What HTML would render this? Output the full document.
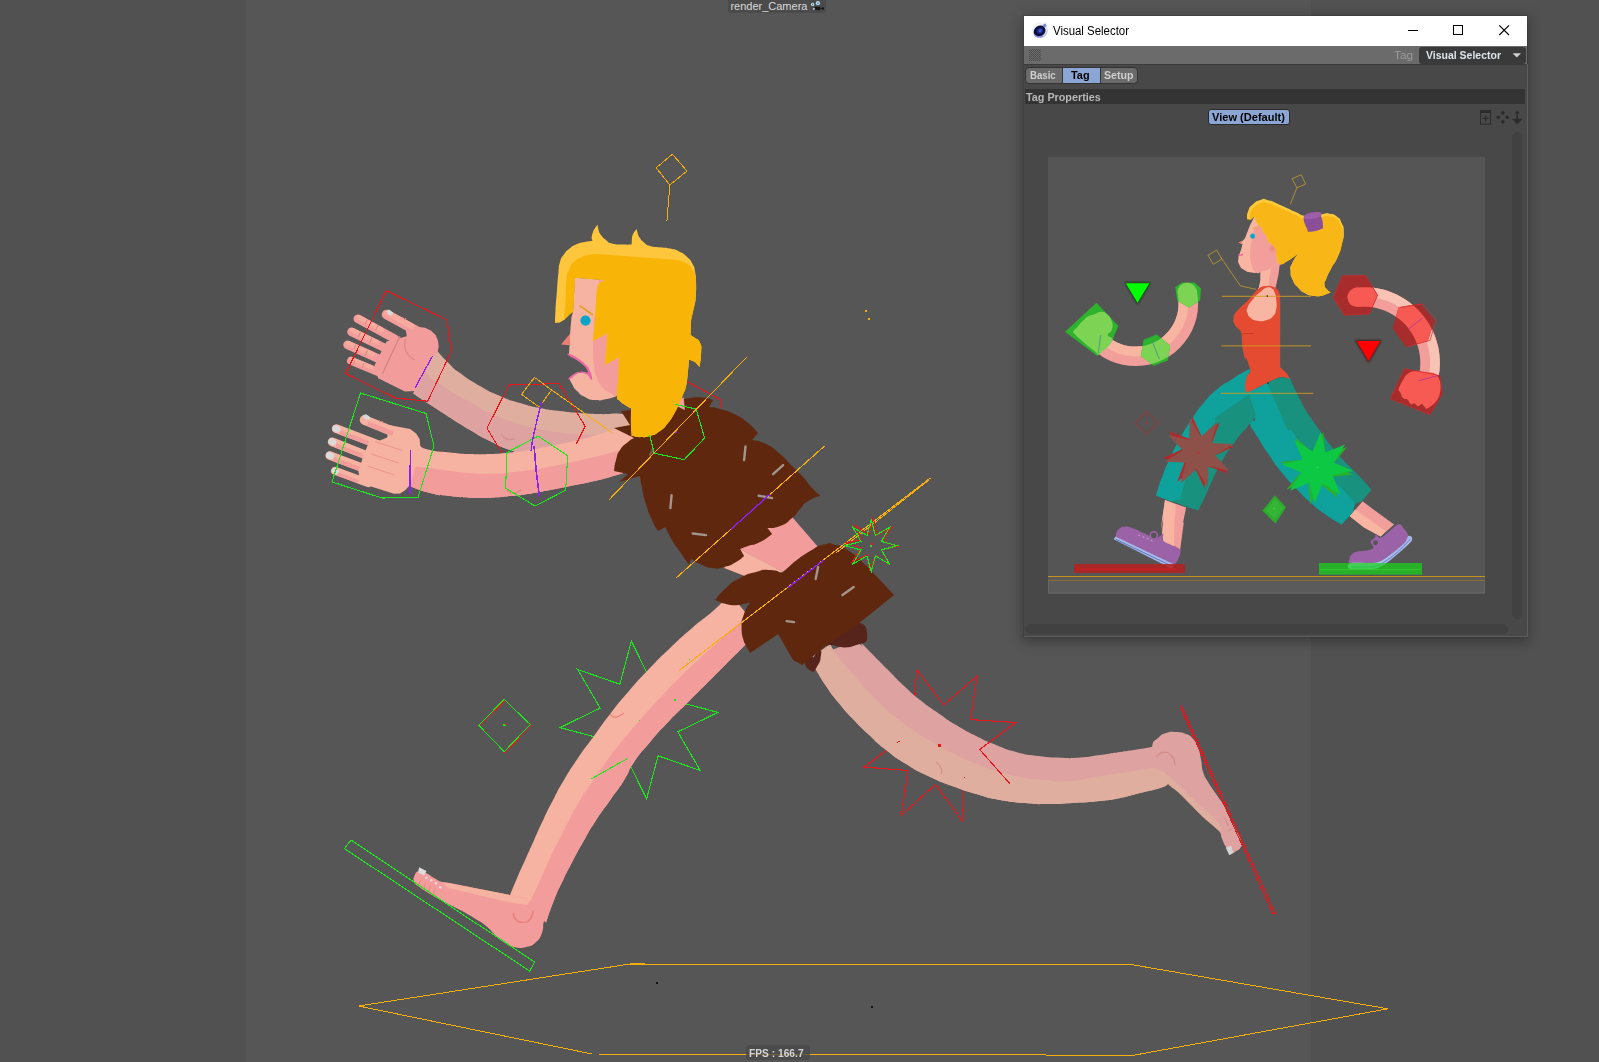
<!DOCTYPE html>
<html><head><meta charset="utf-8"><title>Visual Selector</title>
<style>
html,body{margin:0;padding:0;background:#565656;overflow:hidden}
body{width:1599px;height:1062px;position:relative;font-family:"Liberation Sans",sans-serif}
#art{position:absolute;left:0;top:0}
.t{position:absolute;white-space:nowrap;line-height:1;transform-origin:0 0}
#win{position:absolute;left:1024px;top:16px;width:503px;height:621px;background:#484848;box-shadow:0 3px 12px 2px rgba(0,0,0,.30), 0 0 0 1px rgba(60,60,60,.35)}
#title{position:absolute;left:0;top:0;width:503px;height:30px;background:#fff}
#bar{position:absolute;left:0;top:30px;width:503px;height:18px;background:#6b6b6b;border-bottom:1px solid #3c3c3c}
#dd{position:absolute;left:395px;top:30.5px;width:107px;height:17px;background:#3a3a3a;border-radius:3px}
.tab{position:absolute;top:51px;height:16px;background:#6a6a6a;border:1px solid #333;box-sizing:border-box}
#band{position:absolute;left:1px;top:73px;width:500px;height:14.5px;background:#343434}
#btn{position:absolute;left:184px;top:92.5px;width:82px;height:16.5px;background:#8ba5d4;border:1px solid #2a2a2a;border-radius:3px;box-sizing:border-box}
</style></head><body>
<div style="position:absolute;left:0;top:0;width:246px;height:1062px;background:#515151"></div><div style="position:absolute;left:1311px;top:0;width:288px;height:1062px;background:#515151"></div>
<div id="win">
 <div id="title"></div>
 <div id="bar"></div><div id="dd"></div>
 <div class="tab" style="left:0.5px;width:38.5px;border-radius:4px 0 0 4px;height:17.5px;top:50.5px"></div>
 <div class="tab" style="left:38px;width:38.5px;background:#8ba5d4;height:17.5px;top:50.5px"></div>
 <div class="tab" style="left:75.5px;width:38.5px;border-radius:0 4px 4px 0;height:17.5px;top:50.5px"></div>
 <div id="band"></div>
 <div id="btn"></div>
</div>
<div style="position:absolute;left:728px;top:0;width:98px;height:12.5px;background:#4b4b4b;border-radius:0 0 3px 3px"></div>
<svg id="art" width="1599" height="1062" viewBox="0 0 1599 1062">
<g shape-rendering="crispEdges">
<path d="M358.6,1006 L630,964 L1131,964.5 L1388,1008.8 L1134,1055.2 L592,1054Z" fill="none" stroke="#f6ae0d" stroke-width="1" />
<rect x="656" y="982" width="2.4" height="2.4" fill="#151515"/><rect x="871" y="1006" width="2.4" height="2.4" fill="#151515"/>
<path d="M718.0,712.4 L677.8,731.9 L700.3,770.5 L658.1,755.8 L646.6,799.0 L627.1,758.8 L588.5,781.3 L603.2,739.1 L560.0,727.6 L600.2,708.1 L577.7,669.5 L619.9,684.2 L631.4,641.0 L650.9,681.2 L689.5,658.7 L674.8,700.9Z" fill="none" stroke="#1ce61c" stroke-width="1.1" />
<path d="M914.5,702.0 L916.7,669.6" fill="none" stroke="#e8151a" stroke-width="1.1" />
<path d="M889.7,748.1 L864.1,767.1 L908.1,770.5 L901.5,815.1 L935.5,784.5 L962.5,821.1 L964.1,787.1" fill="none" stroke="#e8151a" stroke-width="1.1" />
</g>
<path d="M436.0,349.4 C440.2,353.9 440.5,355.0 448.5,362.9 C456.5,370.8 449.5,365.3 460.0,373.0 C470.5,380.7 466.7,378.3 480.0,386.0 C493.3,393.7 486.6,390.3 500.0,396.0 C513.4,401.7 506.7,399.0 520.1,403.0 C533.5,407.0 526.8,405.3 540.1,408.0 C553.4,410.7 546.8,409.4 560.1,411.1 C573.4,412.8 566.8,412.1 580.1,413.1 C593.4,414.1 586.1,413.8 600.1,414.1 C614.1,414.4 611.4,412.8 622.1,414.1 C632.8,415.4 628.8,416.8 632.1,418.1 L632.1,430.1 C624.8,434.1 626.8,434.8 610.1,442.1 C593.4,449.4 600.8,447.4 582.1,452.1 C563.4,456.8 571.4,455.1 554.1,456.1 C536.8,457.1 544.8,457.1 530.1,455.1 C515.4,453.1 523.5,454.8 510.1,450.1 C496.7,445.4 503.4,447.8 490.0,441.1 C476.6,434.4 488.0,441.0 470.0,430.1 C452.0,419.2 454.9,420.7 436.0,408.5 C417.1,396.3 420.8,398.5 413.2,393.5Z" fill="#e0ae9e"/>
<path d="M424.6,371.2 C430.5,376.0 427.1,375.4 442.2,385.7 C457.3,396.0 454.1,392.9 470.0,402.0 C485.9,411.1 476.6,406.7 490.0,413.1 C503.4,419.5 496.7,416.4 510.1,421.1 C523.5,425.8 516.8,423.8 530.1,427.1 C543.4,430.4 536.8,428.9 550.1,431.1 C563.4,433.3 556.8,432.6 570.1,433.7 C583.4,434.8 576.8,434.7 590.1,434.5 C603.4,434.3 596.1,435.9 610.1,433.1 C624.1,430.3 624.8,428.4 632.1,426.1 L632.1,430.1 C624.8,434.1 626.8,434.8 610.1,442.1 C593.4,449.4 600.8,447.4 582.1,452.1 C563.4,456.8 571.4,455.1 554.1,456.1 C536.8,457.1 544.8,457.1 530.1,455.1 C515.4,453.1 523.5,454.8 510.1,450.1 C496.7,445.4 503.4,447.8 490.0,441.1 C476.6,434.4 488.0,441.0 470.0,430.1 C452.0,419.2 454.9,420.7 436.0,408.5 C417.1,396.3 420.8,398.5 413.2,393.5Z" fill="#dea2a1"/>
<path d="M501.0,434.1 C503.0,435.8 502.3,437.6 507.0,439.1 C511.7,440.6 512.4,438.8 515.1,438.7" fill="none" stroke="#d4908a" stroke-width="1.2"/>
<path d="M856.1,640.1 C858.1,642.1 860.1,644.8 862.1,646.1 C864.1,647.4 858.1,640.7 862.1,644.0 C866.1,647.3 865.4,647.3 874.1,656.0 C882.8,664.7 878.1,660.0 888.1,670.0 C898.1,680.0 893.4,676.0 904.1,686.0 C914.8,696.0 908.8,691.0 920.1,700.0 C931.4,709.0 926.1,704.6 938.1,713.0 C950.1,721.4 943.4,717.4 956.1,725.1 C968.8,732.8 962.8,729.4 976.1,736.1 C989.4,742.8 982.8,739.8 996.1,745.1 C1009.4,750.4 1002.1,748.4 1016.1,752.1 C1030.1,755.8 1023.5,754.2 1038.2,756.1 C1052.9,758.0 1046.2,757.2 1060.2,757.7 C1074.2,758.2 1066.9,758.4 1080.2,757.5 C1093.5,756.6 1086.8,756.8 1100.1,755.0 C1113.4,753.2 1106.8,754.0 1120.1,752.0 C1133.4,750.0 1129.4,750.7 1140.1,749.0 C1150.8,747.3 1148.1,747.7 1152.1,747.0 L1168.1,784.1 C1165.4,785.4 1169.4,785.1 1160.1,788.1 C1150.8,791.1 1153.4,789.8 1140.1,793.1 C1126.8,796.4 1133.4,795.4 1120.1,798.1 C1106.8,800.8 1116.1,799.4 1100.1,801.1 C1084.1,802.8 1089.5,802.1 1072.2,803.1 C1054.9,804.1 1064.2,804.1 1048.2,804.1 C1032.2,804.1 1040.2,804.4 1024.2,803.1 C1008.2,801.8 1016.1,803.1 1000.1,800.1 C984.1,797.1 992.1,798.8 976.1,794.1 C960.1,789.4 968.1,792.1 952.1,786.1 C936.1,780.1 943.4,783.4 928.1,776.1 C912.8,768.8 920.1,772.8 906.1,764.1 C892.1,755.4 898.8,760.1 886.1,750.1 C873.4,740.1 879.5,744.8 868.1,734.1 C856.7,723.4 862.0,728.7 852.0,718.0 C842.0,707.3 846.7,712.7 838.0,702.0 C829.3,691.3 833.3,696.7 826.0,686.0 C818.7,675.3 820.0,676.0 816.0,670.0 C812.0,664.0 816.7,671.4 814.1,668.1 C811.5,664.8 810.1,662.8 808.1,660.1Z" fill="#dea2a1"/>
<path d="M830.1,644.1 C831.4,646.4 833.5,649.8 834.1,651.1 C834.7,652.4 828.7,643.7 832.0,648.0 C835.3,652.3 835.3,653.3 844.0,664.0 C852.7,674.7 848.0,669.0 858.0,680.0 C868.0,691.0 862.7,685.7 874.1,697.0 C885.5,708.3 880.1,703.6 892.1,714.0 C904.1,724.4 897.4,719.1 910.1,728.1 C922.8,737.1 916.1,732.8 930.1,741.1 C944.1,749.4 937.4,745.8 952.1,753.1 C966.8,760.4 959.4,757.1 974.1,763.1 C988.8,769.1 980.7,766.4 996.1,771.1 C1011.5,775.8 1004.2,774.1 1020.2,777.1 C1036.2,780.1 1027.5,778.8 1044.2,780.1 C1060.9,781.4 1051.6,782.4 1070.2,781.1 C1088.8,779.8 1083.5,778.8 1100.1,776.1 C1116.7,773.4 1106.8,775.1 1120.1,773.1 C1133.4,771.1 1128.8,771.8 1140.1,770.1 C1151.4,768.4 1149.4,768.7 1154.1,768.0 L1168.1,784.1 C1165.4,785.4 1169.4,785.1 1160.1,788.1 C1150.8,791.1 1153.4,789.8 1140.1,793.1 C1126.8,796.4 1133.4,795.4 1120.1,798.1 C1106.8,800.8 1116.1,799.4 1100.1,801.1 C1084.1,802.8 1089.5,802.1 1072.2,803.1 C1054.9,804.1 1064.2,804.1 1048.2,804.1 C1032.2,804.1 1040.2,804.4 1024.2,803.1 C1008.2,801.8 1016.1,803.1 1000.1,800.1 C984.1,797.1 992.1,798.8 976.1,794.1 C960.1,789.4 968.1,792.1 952.1,786.1 C936.1,780.1 943.4,783.4 928.1,776.1 C912.8,768.8 920.1,772.8 906.1,764.1 C892.1,755.4 898.8,760.1 886.1,750.1 C873.4,740.1 879.5,744.8 868.1,734.1 C856.7,723.4 862.0,728.7 852.0,718.0 C842.0,707.3 846.7,712.7 838.0,702.0 C829.3,691.3 833.3,696.7 826.0,686.0 C818.7,675.3 820.0,676.0 816.0,670.0 C812.0,664.0 816.7,671.4 814.1,668.1 C811.5,664.8 810.1,662.8 808.1,660.1Z" fill="#e0ae9e"/>
<path d="M1152.1,747.0 C1153.2,739.0 1154.4,741.7 1158.1,738.0 C1161.8,734.3 1161.3,734.6 1166.1,733.0 C1170.9,731.4 1170.8,731.7 1176.1,732.0 C1181.4,732.3 1181.6,732.1 1186.1,734.0 C1190.6,735.9 1189.9,735.3 1193.1,739.0 C1196.3,742.7 1196.0,742.4 1198.1,748.0 C1200.2,753.6 1199.8,753.6 1201.1,760.0 C1202.4,766.4 1201.2,766.2 1203.1,772.1 C1205.0,778.0 1204.6,776.2 1208.1,782.1 C1211.6,788.0 1211.8,787.7 1216.1,794.1 C1220.4,800.5 1220.4,799.7 1224.1,806.1 C1227.8,812.5 1226.9,811.7 1230.1,818.1 C1233.3,824.5 1233.1,823.7 1236.1,830.1 C1239.1,836.5 1240.1,837.3 1241.2,842.1 C1242.3,846.9 1241.6,845.7 1240.2,848.1 C1238.8,850.5 1238.3,849.9 1236.1,851.1 C1233.9,852.3 1234.8,853.6 1232.1,852.5 C1229.4,851.4 1228.8,850.7 1226.1,847.1 C1223.4,843.5 1224.2,843.6 1222.1,839.1 C1220.0,834.6 1222.9,835.7 1218.1,830.1 C1213.3,824.5 1211.6,825.0 1204.1,818.1 C1196.6,811.2 1197.0,811.0 1190.1,804.1 C1183.2,797.2 1184.0,797.4 1178.1,792.1 C1172.2,786.8 1174.5,790.5 1168.1,784.1 C1161.7,777.7 1158.4,777.9 1154.1,768.0 C1149.8,758.1 1151.0,755.0 1152.1,747.0Z" fill="#dea2a1"/>
<path d="M1154.1,768.0 L1164.1,772.1 L1180.1,786.1 L1196.1,802.1 L1210.1,814.1 L1218.1,822.1 L1222.1,830.5 L1218.5,830.5 L1204.1,818.1 L1190.1,804.1 L1178.1,792.1 L1168.1,784.1 L1152.1,782.1Z" fill="#e0ae9e"/>
<path d="M1225.7,847.5 L1231.1,845.7 L1233.3,853.1 L1229.3,855.3Z" fill="#d4d4d4"/>
<path d="M1156.1,757.0 C1158.4,755.5 1157.9,752.7 1163.1,752.4 C1168.3,752.1 1167.7,751.8 1171.7,756.0 C1175.7,760.2 1174.0,762.0 1175.1,765.0" fill="none" stroke="#d28c88" stroke-width="1.2"/>
<path d="M936.1,762.1 C937.8,764.1 939.4,764.1 941.1,768.1 C942.8,772.1 941.1,772.1 941.1,774.1" fill="none" stroke="#d28c88" stroke-width="1.2"/>
<path d="M1225.1,818.1 L1228.1,826.1" fill="none" stroke="#d28c88" stroke-width="1.0" />
<path d="M1227.1,831.1 L1233.1,828.1" fill="none" stroke="#d28c88" stroke-width="1.0" />
<path d="M826.1,643.1 C831.9,638.0 848.5,624.0 858.1,623.1 C867.7,622.2 867.6,634.0 867.1,639.1 C866.6,644.2 861.5,643.1 856.1,645.1 C850.7,647.1 849.5,647.5 844.1,647.5 C838.7,647.5 837.3,646.1 833.1,645.1 C828.9,644.1 820.3,648.2 826.1,643.1Z" fill="#56241a"/>
<path d="M805.1,661.1 C806.7,656.1 815.5,650.7 819.1,650.1 C822.7,649.5 820.9,654.9 820.5,658.5 C820.1,662.1 819.5,662.7 817.5,665.7 C815.5,668.7 815.0,672.6 812.1,671.5 C809.2,670.4 803.5,666.1 805.1,661.1Z" fill="#56241a"/>
<path d="M815.5,652.1 L813.1,656.1" fill="none" stroke="#a3948c" stroke-width="2.2" stroke-linecap="round"/>
<path d="M760.1,520.1 L792.1,517.1 L818.1,547.1 L800.1,560.1 L782.5,572.1 L738.1,548.1Z" fill="#f29d9b"/>
<path d="M738.1,548.1 L782.5,571.7 L760.1,582.1 L724.1,568.1Z" fill="#f7b3a1"/>
<path d="M730.1,594.0 C724.8,599.3 726.8,598.7 714.1,610.0 C701.4,621.3 706.8,615.3 692.1,628.0 C677.4,640.7 684.8,634.0 670.1,648.0 C655.4,662.0 662.1,655.4 648.1,670.1 C634.1,684.8 640.8,677.4 628.1,692.1 C615.4,706.8 621.5,699.4 610.1,714.1 C598.7,728.8 604.7,721.4 594.0,736.1 C583.3,750.8 588.0,743.4 578.0,758.1 C568.0,772.8 572.0,766.8 564.0,780.1 C556.0,793.4 560.7,785.4 554.1,798.0 C547.5,810.6 550.8,804.0 544.1,818.0 C537.4,832.0 540.4,826.0 534.1,840.0 C527.8,854.0 530.8,847.4 525.1,860.1 C519.4,872.8 522.1,866.4 517.1,878.1 C512.1,889.8 512.4,889.4 510.1,895.1 L546.1,922.5 C548.8,915.0 548.4,914.2 554.1,900.1 C559.8,886.0 556.7,893.4 563.1,880.1 C569.5,866.8 566.2,873.5 573.2,860.1 C580.2,846.7 576.5,853.4 584.2,840.0 C591.9,826.6 587.5,833.3 596.2,820.0 C604.9,806.7 600.9,813.3 610.2,800.0 C619.5,786.7 616.2,792.6 624.2,780.0 C632.2,767.4 625.5,774.7 634.1,762.1 C642.7,749.5 638.8,755.4 650.1,742.1 C661.4,728.8 655.4,735.4 668.1,722.1 C680.8,708.8 674.8,715.4 688.1,702.1 C701.4,688.8 695.4,694.8 708.1,682.1 C720.8,669.4 714.8,675.4 726.1,664.0 C737.4,652.6 730.8,659.3 742.1,648.0 C753.4,636.7 754.1,636.0 760.1,630.0Z" fill="#f7b3a1"/>
<path d="M750.1,612.0 C746.8,615.3 750.1,612.7 740.1,622.0 C730.1,631.3 733.4,628.0 720.1,640.0 C706.8,652.0 714.1,645.0 700.1,658.0 C686.1,671.0 692.1,665.1 678.1,679.1 C664.1,693.1 670.8,686.4 658.1,700.1 C645.4,713.8 652.1,706.4 640.1,720.1 C628.1,733.8 633.5,727.1 622.1,741.1 C610.7,755.1 616.0,748.4 606.0,762.1 C596.0,775.8 600.6,769.5 592.0,782.1 C583.4,794.7 587.5,788.0 580.2,800.0 C572.9,812.0 576.9,805.3 570.2,818.0 C563.5,830.7 566.8,824.7 560.1,838.0 C553.4,851.3 556.4,844.6 550.1,858.0 C543.8,871.4 547.1,864.7 541.1,878.1 C535.1,891.5 536.4,889.1 532.1,898.1 C527.8,907.1 529.4,902.8 528.1,905.1 L546.1,922.5 C548.8,915.0 548.4,914.2 554.1,900.1 C559.8,886.0 556.7,893.4 563.1,880.1 C569.5,866.8 566.2,873.5 573.2,860.1 C580.2,846.7 576.5,853.4 584.2,840.0 C591.9,826.6 587.5,833.3 596.2,820.0 C604.9,806.7 600.9,813.3 610.2,800.0 C619.5,786.7 616.2,792.6 624.2,780.0 C632.2,767.4 625.5,774.7 634.1,762.1 C642.7,749.5 638.8,755.4 650.1,742.1 C661.4,728.8 655.4,735.4 668.1,722.1 C680.8,708.8 674.8,715.4 688.1,702.1 C701.4,688.8 695.4,694.8 708.1,682.1 C720.8,669.4 714.8,675.4 726.1,664.0 C737.4,652.6 730.8,659.3 742.1,648.0 C753.4,636.7 754.1,636.0 760.1,630.0Z" fill="#f29d9b"/>
<path d="M510.1,895.1 C499.4,892.7 500.8,893.2 490.1,891.1 C479.4,889.0 480.8,889.2 470.1,887.1 C459.4,885.0 457.6,884.4 450.1,883.1 C442.6,881.8 446.4,883.4 442.1,882.1 C437.8,880.8 438.4,880.5 434.1,878.1 C429.8,875.7 430.1,875.0 426.1,873.1 C422.1,871.2 422.2,870.4 419.1,871.1 C416.0,871.8 415.8,872.9 414.5,875.7 C413.2,878.5 413.1,878.9 414.1,881.7 C415.1,884.5 413.8,882.8 418.1,886.1 C422.4,889.4 422.6,889.6 430.1,894.1 C437.6,898.6 438.1,898.8 446.1,903.1 C454.1,907.4 452.6,906.1 460.1,910.1 C467.6,914.1 467.2,913.8 474.1,918.1 C481.0,922.4 480.2,921.3 486.1,926.1 C492.0,930.9 491.3,931.7 496.1,936.1 C500.9,940.5 499.3,939.6 504.1,942.5 C508.9,945.4 508.2,945.9 514.1,947.1 C520.0,948.3 520.2,948.4 526.1,947.1 C532.0,945.8 531.8,946.0 536.1,942.1 C540.4,938.2 540.1,937.8 542.1,932.5 C544.1,927.2 542.5,925.9 543.7,922.1 C544.9,918.3 548.0,921.8 546.5,918.1 C545.0,914.4 542.5,912.9 538.1,908.1 C533.7,903.3 537.6,903.6 530.1,900.1 C522.6,896.6 520.8,897.5 510.1,895.1Z" fill="#f29d9b"/>
<path d="M442.1,882.1 L510.1,895.1 L531.1,899.5 L527.1,905.1 L510.1,902.5 L470.1,893.1 L448.1,888.1Z" fill="#f7b3a1"/>
<path d="M513.1,913.1 C514.1,915.3 512.8,916.7 516.1,919.7 C519.4,922.7 518.4,922.3 523.1,922.1 C527.8,921.9 526.8,923.0 530.1,919.1 C533.4,915.2 532.1,913.4 533.1,910.5" fill="none" stroke="#ea7d78" stroke-width="1.4"/>
<path d="M419.1,867.3 L426.5,871.1 L424.1,875.5 L418.1,872.5Z" fill="#dcdcdc"/>
<circle cx="426.5" cy="877.7" r="1.3" fill="#dcdcdc"/>
<circle cx="431.3" cy="880.3" r="1.3" fill="#dcdcdc"/>
<circle cx="435.9" cy="883.3" r="1.3" fill="#dcdcdc"/>
<circle cx="440.3" cy="887.3" r="1.3" fill="#dcdcdc"/>
<path d="M421.1,880.1 C420.6,881.6 419.1,881.6 419.5,884.5 C419.9,887.4 421.4,887.4 422.3,888.9" fill="none" stroke="#ea7d78" stroke-width="0.9"/>
<path d="M425.9,882.9 C425.4,884.4 423.9,884.4 424.3,887.3 C424.7,890.2 426.2,890.2 427.1,891.7" fill="none" stroke="#ea7d78" stroke-width="0.9"/>
<path d="M430.7,885.7 C430.2,887.2 428.7,887.2 429.1,890.1 C429.5,893.0 431.0,893.0 431.9,894.5" fill="none" stroke="#ea7d78" stroke-width="0.9"/>
<path d="M435.5,888.5 C435.0,890.0 433.5,890.0 433.9,892.9 C434.3,895.8 435.8,895.8 436.7,897.3" fill="none" stroke="#ea7d78" stroke-width="0.9"/>
<path d="M610.1,714.5 C612.1,715.4 611.6,717.6 616.1,717.1 C620.6,716.6 621.2,714.4 623.7,713.1" fill="none" stroke="#ea807a" stroke-width="1.2"/>
<path d="M715.0,600.0 L715.0,600.0 C718.7,596.0 717.7,595.3 726.0,588.0 C734.3,580.7 730.0,583.3 740.0,578.0 C750.0,572.7 746.0,574.7 756.0,572.0 C766.0,569.3 761.4,569.7 770.1,570.0 C778.8,570.3 778.1,572.0 782.1,573.0 L794.1,562.0 C799.4,558.3 800.1,556.9 810.1,551.0 C820.1,545.1 815.4,546.4 824.1,544.4 C832.8,542.4 828.1,543.0 836.1,545.0 C844.1,547.0 840.1,545.4 848.1,550.4 C856.1,555.4 850.8,551.5 860.1,560.0 C869.4,568.5 864.8,564.3 876.1,576.0 C887.4,587.7 888.1,588.7 894.1,595.0 L858.1,624.1 L828.1,644.1 L802.1,665.1 L793.1,660.1 L786.1,648.1 L778.1,634.1 L750.0,653.1 L744.0,642.1 C743.2,637.4 741.6,637.5 741.6,628.1 C741.6,618.7 741.2,622.6 744.0,614.0 C746.8,605.4 748.0,606.3 750.0,602.4 L740.0,605.0 C736.0,604.8 736.3,606.1 728.0,604.4 C719.7,602.7 719.3,601.5 715.0,600.0Z" fill="#60270f"/>
<path d="M818.1,567.0 L815.7,579.0" fill="none" stroke="#a3948c" stroke-width="2.4" stroke-linecap="round"/>
<path d="M853.7,587.0 L842.5,595.0" fill="none" stroke="#a3948c" stroke-width="2.4" stroke-linecap="round"/>
<path d="M786.7,621.1 L794.1,622.1" fill="none" stroke="#a3948c" stroke-width="2.4" stroke-linecap="round"/>
<path d="M419.1,445.5 C422.7,447.0 419.7,447.8 430.0,450.1 C440.3,452.4 436.7,451.2 450.0,452.5 C463.3,453.8 456.7,453.6 470.0,454.1 C483.3,454.6 476.6,454.6 490.0,454.1 C503.4,453.6 496.7,453.8 510.1,452.5 C523.5,451.2 516.8,452.2 530.1,450.1 C543.4,448.0 536.8,448.8 550.1,446.1 C563.4,443.4 556.8,445.1 570.1,442.1 C583.4,439.1 576.8,440.8 590.1,437.1 C603.4,433.4 596.8,435.4 610.1,431.1 C623.4,426.8 619.4,427.8 630.1,424.1 C640.8,420.4 638.1,421.4 642.1,420.1 L642.1,468.1 C638.1,469.1 640.8,468.1 630.1,471.1 C619.4,474.1 623.4,473.4 610.1,477.1 C596.8,480.8 603.4,479.1 590.1,482.1 C576.8,485.1 583.4,483.4 570.1,486.1 C556.8,488.8 563.4,487.6 550.1,490.1 C536.8,492.6 543.4,491.7 530.1,493.7 C516.8,495.7 523.5,494.8 510.1,496.1 C496.7,497.4 503.4,497.2 490.0,497.7 C476.6,498.2 483.3,498.2 470.0,497.7 C456.7,497.2 463.3,497.6 450.0,496.1 C436.7,494.6 444.0,496.6 430.0,493.1 C416.0,489.6 415.4,488.1 408.1,485.6Z" fill="#f7b3a1"/>
<path d="M413.6,466.5 C419.1,467.0 417.9,466.6 430.0,468.1 C442.1,469.6 436.7,469.4 450.0,471.1 C463.3,472.8 456.7,472.2 470.0,473.1 C483.3,474.0 476.6,473.9 490.0,473.7 C503.4,473.5 496.7,473.7 510.1,472.5 C523.5,471.3 516.8,472.0 530.1,470.1 C543.4,468.2 536.8,469.2 550.1,466.7 C563.4,464.2 556.8,465.4 570.1,462.5 C583.4,459.6 576.8,461.2 590.1,458.1 C603.4,455.0 596.8,456.8 610.1,453.1 C623.4,449.4 619.4,450.1 630.1,447.1 C640.8,444.1 638.1,445.1 642.1,444.1 L642.1,468.1 C638.1,469.1 640.8,468.1 630.1,471.1 C619.4,474.1 623.4,473.4 610.1,477.1 C596.8,480.8 603.4,479.1 590.1,482.1 C576.8,485.1 583.4,483.4 570.1,486.1 C556.8,488.8 563.4,487.6 550.1,490.1 C536.8,492.6 543.4,491.7 530.1,493.7 C516.8,495.7 523.5,494.8 510.1,496.1 C496.7,497.4 503.4,497.2 490.0,497.7 C476.6,498.2 483.3,498.2 470.0,497.7 C456.7,497.2 463.3,497.6 450.0,496.1 C436.7,494.6 444.0,496.6 430.0,493.1 C416.0,489.6 415.4,488.1 408.1,485.6Z" fill="#f29d9b"/>
<path d="M507.0,490.1 C509.0,491.1 508.4,493.1 513.1,493.1 C517.8,493.1 518.4,491.1 521.1,490.1" fill="none" stroke="#ea807a" stroke-width="1.2"/>
<path d="M684.1,399.0 C689.4,398.4 690.4,396.9 700.1,397.2 C709.8,397.5 708.8,399.1 713.1,400.0 L709.1,407.0 C712.8,407.7 711.1,406.3 720.1,409.0 C729.1,411.7 726.8,410.3 736.1,415.0 C745.4,419.7 740.8,417.0 748.1,423.0 C755.4,429.0 754.8,429.7 758.1,433.0 L752.1,440.0 C756.8,441.3 756.8,439.3 766.1,444.0 C775.4,448.7 771.4,446.6 780.1,454.0 C788.8,461.4 784.8,458.7 792.1,466.1 C799.4,473.5 795.4,468.8 802.1,476.1 C808.8,483.4 806.1,481.6 812.1,488.1 C818.1,494.6 817.4,493.2 820.1,495.7 L820.1,495.7 C816.1,497.5 814.8,496.6 808.1,501.1 C801.4,505.6 805.4,503.4 800.1,509.1 C794.8,514.8 798.8,512.4 792.1,518.1 C785.4,523.8 788.3,522.8 780.1,526.1 C771.9,529.4 771.7,527.4 767.5,528.1 L772.1,534.1 C768.1,536.8 768.1,538.1 760.1,542.1 C752.1,546.1 754.8,543.8 748.1,546.1 C741.4,548.4 742.8,548.1 740.1,549.1 L744.1,556.1 C741.4,558.1 742.8,558.4 736.1,562.1 C729.4,565.8 732.1,565.1 724.1,567.1 C716.1,569.1 720.1,569.1 712.1,568.1 C704.1,567.1 707.1,567.2 700.1,564.1 C693.1,561.0 694.1,560.5 691.1,558.7 L689.1,565.1 C686.1,560.8 685.8,560.4 680.1,552.1 C674.4,543.8 676.9,548.4 672.0,540.1 C667.1,531.8 667.6,531.4 665.4,527.1 L658.0,531.1 C656.0,527.4 656.0,529.1 652.0,520.1 C648.0,511.1 649.3,514.8 646.0,504.1 C642.7,493.4 644.0,497.4 642.0,488.1 C640.0,478.8 640.7,480.1 640.0,476.1 L619.0,482.1 L628.0,474.1 L614.0,471.1 C614.7,467.4 614.0,467.1 616.0,460.1 C618.0,453.1 616.0,456.0 620.0,450.0 C624.0,444.0 623.3,446.0 628.0,442.0 C632.7,438.0 632.0,439.3 634.0,438.0 L614.0,428.0 L630.0,425.0 L621.0,411.0 L632.0,410.0 L650.0,414.0 L666.0,408.0Z" fill="#60270f"/>
<path d="M745.5,446.4 L744.1,460.1" fill="none" stroke="#a3948c" stroke-width="2.4" stroke-linecap="round"/>
<path d="M783.1,465.1 L773.1,474.1" fill="none" stroke="#a3948c" stroke-width="2.4" stroke-linecap="round"/>
<path d="M758.7,495.7 L772.1,498.1" fill="none" stroke="#a3948c" stroke-width="2.4" stroke-linecap="round"/>
<path d="M671.6,495.1 L670.4,508.1" fill="none" stroke="#a3948c" stroke-width="2.4" stroke-linecap="round"/>
<path d="M692.7,533.5 L706.1,535.1" fill="none" stroke="#a3948c" stroke-width="2.4" stroke-linecap="round"/>
<path d="M653.0,449.0 L650.0,455.0" fill="none" stroke="#7d5a4a" stroke-width="2.2" stroke-linecap="round"/>
<path d="M405.0,325.5 L425.1,327.8 L431.1,330.8 L435.6,335.0 L438.1,341.0 L438.7,347.0 L437.1,353.2 L433.6,355.5 L416.3,389.6 L415.1,391.0 L405.0,391.6 L378.2,378.3 L374.5,365.3 L380.5,353.2 L386.5,341.6 L406.8,336.2Z" fill="#f29d9b"/>
<path d="M386.5,314.5 L425.1,335.5" stroke="#f29d9b" stroke-width="9.6" stroke-linecap="round" fill="none"/>
<path d="M387.4,312.9 L411.3,326.0" stroke="#f6ab9e" stroke-width="5.8" stroke-linecap="round" fill="none"/>
<path d="M357.8,318.8 L395.0,339.0" stroke="#f29d9b" stroke-width="8.6" stroke-linecap="round" fill="none"/>
<path d="M358.7,317.2 L381.8,329.8" stroke="#f6ab9e" stroke-width="4.8" stroke-linecap="round" fill="none"/>
<path d="M351.5,331.8 L391.0,351.0" stroke="#f29d9b" stroke-width="8.6" stroke-linecap="round" fill="none"/>
<path d="M352.3,330.2 L376.8,342.1" stroke="#f6ab9e" stroke-width="4.8" stroke-linecap="round" fill="none"/>
<path d="M347.5,344.8 L387.0,362.5" stroke="#f29d9b" stroke-width="8.6" stroke-linecap="round" fill="none"/>
<path d="M348.2,343.2 L372.7,354.2" stroke="#f6ab9e" stroke-width="4.8" stroke-linecap="round" fill="none"/>
<path d="M351.0,360.7 L383.0,374.1" stroke="#f29d9b" stroke-width="8.0" stroke-linecap="round" fill="none"/>
<path d="M351.7,359.1 L371.6,367.3" stroke="#f6ab9e" stroke-width="4.2" stroke-linecap="round" fill="none"/>
<path d="M386.5,311.2 L389.0,309.5 L393.0,312.5 L392.0,315.5 L388.5,314.5Z" fill="#d9d9d9"/>
<path d="M400.0,336.0 L382.5,373.6" fill="none" stroke="#cf837c" stroke-width="1.2" />
<path d="M405.5,339.0 C405.3,341.7 404.0,341.7 405.0,347.0 C406.0,352.3 405.3,350.7 408.5,355.0 C411.7,359.3 412.5,358.3 414.5,360.0" fill="none" stroke="#d48a84" stroke-width="1.1"/>
<path d="M365.0,324.5 L367.2,319.5" fill="none" stroke="#e08882" stroke-width="1.1" />
<path d="M375.5,330.5 L378.0,325.0" fill="none" stroke="#e08882" stroke-width="1.1" />
<path d="M358.2,337.0 L360.5,332.0" fill="none" stroke="#e08882" stroke-width="1.1" />
<path d="M369.5,343.0 L372.0,337.5" fill="none" stroke="#e08882" stroke-width="1.1" />
<path d="M354.0,349.0 L356.0,344.5" fill="none" stroke="#e08882" stroke-width="1.1" />
<path d="M365.0,356.0 L367.5,350.5" fill="none" stroke="#e08882" stroke-width="1.1" />
<path d="M353.0,365.1 L355.0,360.5" fill="none" stroke="#e08882" stroke-width="1.1" />
<path d="M362.0,368.1 L364.0,363.5" fill="none" stroke="#e08882" stroke-width="1.1" />
<path d="M401.5,319.0 L403.0,317.0" fill="none" stroke="#e08882" stroke-width="1.1" />
<path d="M404.5,320.0 L406.0,318.0" fill="none" stroke="#e08882" stroke-width="1.1" />
<path d="M389.0,425.0 L410.1,429.0 L416.1,433.5 L419.6,439.0 L420.3,446.0 L420.1,451.0 L410.1,485.1 L408.6,486.6 L405.1,490.3 L400.1,493.6 L394.0,493.8 L360.0,483.1 L358.5,471.5 L362.5,458.5 L367.5,445.5 L387.2,437.5Z" fill="#f7b3a1"/>
<path d="M364.5,420.0 L405.1,436.5" stroke="#f7b3a1" stroke-width="9.6" stroke-linecap="round" fill="none"/>
<path d="M367.8,423.5 L393.0,433.8" stroke="#f29d9b" stroke-width="5.0" stroke-linecap="butt" fill="none"/>
<path d="M336.2,428.7 L382.0,446.0" stroke="#f7b3a1" stroke-width="8.8" stroke-linecap="round" fill="none"/>
<path d="M340.1,432.3 L368.5,443.1" stroke="#f29d9b" stroke-width="4.200000000000001" stroke-linecap="butt" fill="none"/>
<path d="M335.5,428.4 L337.3,429.1" stroke="#dadada" stroke-width="6.4" stroke-linecap="round" fill="none"/>
<path d="M332.2,441.8 L376.0,459.0" stroke="#f7b3a1" stroke-width="8.8" stroke-linecap="round" fill="none"/>
<path d="M335.9,445.4 L363.0,456.1" stroke="#f29d9b" stroke-width="4.200000000000001" stroke-linecap="butt" fill="none"/>
<path d="M331.5,441.5 L333.3,442.3" stroke="#dadada" stroke-width="6.4" stroke-linecap="round" fill="none"/>
<path d="M329.8,455.5 L372.0,471.5" stroke="#f7b3a1" stroke-width="8.8" stroke-linecap="round" fill="none"/>
<path d="M333.3,459.0 L359.5,468.9" stroke="#f29d9b" stroke-width="4.200000000000001" stroke-linecap="butt" fill="none"/>
<path d="M329.1,455.3 L330.9,456.0" stroke="#dadada" stroke-width="6.4" stroke-linecap="round" fill="none"/>
<path d="M335.0,470.8 L368.0,483.1" stroke="#f7b3a1" stroke-width="8.0" stroke-linecap="round" fill="none"/>
<path d="M337.6,473.9 L358.1,481.5" stroke="#f29d9b" stroke-width="3.4000000000000004" stroke-linecap="butt" fill="none"/>
<path d="M334.3,470.6 L336.1,471.3" stroke="#dadada" stroke-width="5.6" stroke-linecap="round" fill="none"/>
<path d="M363.2,415.0 L366.2,414.2 L370.2,417.2 L369.0,420.2 L364.0,418.5Z" fill="#dadada"/>
<path d="M375.0,441.5 L402.6,450.5" fill="none" stroke="#e9988c" stroke-width="1.1" />
<path d="M371.5,454.0 L398.5,463.0" fill="none" stroke="#e9988c" stroke-width="1.1" />
<path d="M367.5,466.0 L394.5,475.1" fill="none" stroke="#e9988c" stroke-width="1.1" />
<path d="M379.2,420.5 L380.0,422.5" fill="none" stroke="#e08882" stroke-width="1.2" />
<path d="M382.0,421.0 L382.8,423.0" fill="none" stroke="#e08882" stroke-width="1.2" />
<path d="M673.1,406.1 L683.6,397.0 L684.9,409.9 L679.1,407.3Z" fill="#f29d9b"/>
<path d="M575.0,277.8 L573.0,312.1 L571.5,317.0 L570.0,334.0 L569.5,345.0 L569.0,354.0 L578.0,359.2 L585.0,365.2 L589.0,371.2 L592.0,378.5 L588.0,374.2 L583.0,372.7 L577.0,373.2 L569.5,378.0 L569.5,378.0 C570.3,380.0 569.5,379.7 572.0,384.0 C574.5,388.3 572.7,386.7 577.0,391.0 C581.3,395.3 579.0,394.0 585.0,397.0 C591.0,400.0 587.7,399.4 595.0,400.1 C602.3,400.8 599.7,400.4 607.0,399.0 C614.3,397.6 613.7,397.0 617.0,396.0 L621.0,390.0 L621.0,317.0 L605.0,280.0Z" fill="#f7b3a1"/>
<path d="M593.0,341.0 C593.0,344.0 592.7,342.0 593.0,350.0 C593.3,358.0 592.7,355.7 594.0,365.0 C595.3,374.3 594.0,370.3 597.0,378.0 C600.0,385.7 598.7,383.0 603.0,388.0 C607.3,393.0 605.3,390.3 610.0,393.0 C614.7,395.7 614.7,395.0 617.0,396.0 L621.0,394.0 L621.0,317.0 L594.0,317.0Z" fill="#f29d9b"/>
<path d="M599.0,280.0 L605.0,280.0 L598.5,284.5Z" fill="#f29d9b"/>
<path d="M570.2,333.5 L561.0,344.5 L569.6,345.2Z" fill="#ee7f76"/>
<path d="M569.0,353.8 C571.4,354.5 573.6,355.6 578.0,358.5 C582.4,361.4 582.3,361.2 585.5,364.5 C588.7,367.8 588.2,367.1 590.0,371.0 C591.8,374.9 592.1,376.9 592.2,379.0 C592.3,381.1 591.8,380.1 590.5,379.0 C589.2,377.9 589.5,376.3 587.5,374.8 C585.5,373.3 585.8,373.6 583.0,373.3 C580.2,373.0 580.3,372.3 577.0,373.8 C573.7,375.3 572.6,377.9 570.5,379.0 C568.4,380.1 567.5,379.5 569.0,377.8 C570.5,376.1 572.3,374.2 576.0,372.5 C579.7,370.8 579.9,371.5 583.0,371.5 C586.1,371.5 586.6,373.2 587.5,372.5 C588.4,371.8 587.6,370.9 586.5,369.0 C585.4,367.1 586.0,367.8 583.5,365.5 C581.0,363.2 580.9,363.1 577.0,360.5 C573.1,357.9 571.1,357.6 569.0,355.8 C566.9,354.0 566.6,353.1 569.0,353.8Z" fill="#e868a4"/>
<path d="M568.0,355.8 L577.0,360.7 L583.5,365.8 L586.4,369.2 L587.3,372.3 L583.0,371.3 L576.0,372.2 L568.2,377.6Z" fill="#565656"/>
<circle cx="585.5" cy="320.6" r="5.1" fill="#08a5cb"/>
<path d="M579.5,305.6 L593.0,314.9" stroke="#dba114" stroke-width="1.6"/>
<path d="M555.0,323.1 L555.0,323.1 C555.2,318.8 554.8,321.1 555.5,310.1 C556.2,299.1 556.0,302.7 557.0,290.0 C558.0,277.3 557.5,281.3 558.5,272.0 C559.5,262.7 558.3,267.7 560.0,262.0 C561.7,256.3 560.5,259.3 563.5,255.0 C566.5,250.7 564.8,252.5 569.0,249.0 C573.2,245.5 570.7,246.8 576.0,244.5 C581.3,242.2 579.5,243.2 585.0,242.0 C590.5,240.8 590.0,241.3 592.5,241.0 L591.5,238.0 C592.0,236.0 591.7,235.5 593.0,232.0 C594.3,228.5 594.0,229.9 595.5,227.5 C597.0,225.1 596.8,225.7 597.5,224.8 L598.5,230.0 C599.3,231.7 598.5,231.7 601.0,235.0 C603.5,238.3 602.3,237.2 606.0,240.0 C609.7,242.8 606.3,242.0 612.0,243.5 C617.7,245.0 616.5,244.2 623.0,244.5 C629.5,244.8 628.7,244.5 631.6,244.5 L631.9,239.0 C632.3,237.3 631.5,237.3 633.1,234.0 C634.7,230.7 635.4,230.7 636.6,229.0 L637.6,233.0 C638.3,234.5 637.4,234.3 639.6,237.5 C641.8,240.7 640.6,239.7 644.1,242.5 C647.6,245.3 645.1,244.4 650.1,246.0 C655.1,247.6 652.4,246.4 659.1,247.2 C665.8,248.0 663.4,247.1 670.1,248.5 C676.8,249.9 673.4,248.7 679.1,251.5 C684.8,254.3 682.6,252.8 687.1,257.0 C691.6,261.2 689.9,259.0 692.6,264.0 C695.3,269.0 693.9,265.3 695.1,272.0 C696.3,278.7 695.9,274.6 696.1,284.0 C696.3,293.4 695.8,294.7 695.6,300.1 L691.1,320.0 L690.6,335.0 L695.1,338.0 C696.8,339.7 698.1,338.0 700.1,343.0 C702.1,348.0 701.3,345.0 701.1,353.0 C700.9,361.0 700.1,362.3 699.6,367.0 L695.1,362.0 L689.1,359.5 L688.1,370.0 C687.8,373.3 688.1,373.3 687.1,380.0 C686.1,386.7 686.1,386.0 685.1,390.0 C684.1,394.0 686.1,387.3 684.1,392.0 C682.1,396.7 682.4,396.7 679.0,404.0 C675.6,411.3 677.7,407.7 674.0,414.0 C670.3,420.3 672.7,417.3 668.0,423.0 C663.3,428.7 666.0,426.7 660.0,431.0 C654.0,435.3 656.7,433.9 650.0,436.0 C643.3,438.1 643.3,436.8 640.0,437.2 L640.0,437.2 C637.9,436.8 636.5,437.6 633.6,436.0 C630.7,434.4 632.3,441.7 631.4,432.4 C630.5,423.1 631.1,416.1 631.0,408.0 L631.1,408.1 L632.9,409.1 L632.9,409.1 C630.3,407.8 629.7,408.1 625.1,405.1 C620.5,402.1 621.7,403.1 619.0,400.1 C616.3,397.1 617.3,402.7 617.0,396.0 C616.7,389.3 617.7,385.3 618.0,380.0 L619.0,357.0 L605.0,365.0 L606.0,350.0 L607.5,333.0 L593.0,341.0 L595.0,320.0 L596.0,300.1 C596.3,296.7 596.0,295.4 597.0,290.0 C598.0,284.6 596.3,287.3 599.0,284.0 C601.7,280.7 603.0,281.3 605.0,280.0 L575.0,277.8 L573.0,312.1 L573.0,312.1 C572.0,312.8 572.7,311.8 570.0,314.1 C567.3,316.4 568.3,316.3 565.0,319.1 C561.7,321.9 561.7,321.4 560.0,322.6Z" fill="#fdc63c"/>
<path d="M564.0,320.1 L564.0,320.1 C564.5,313.4 564.7,313.5 565.5,300.1 C566.3,286.7 565.3,290.0 566.5,280.0 C567.7,270.0 566.5,276.0 569.0,270.0 C571.5,264.0 569.7,266.3 574.0,262.0 C578.3,257.7 576.7,259.4 582.0,257.0 C587.3,254.6 585.0,255.8 590.0,254.8 C595.0,253.8 594.7,254.3 597.0,254.0 L670.1,259.5 C673.1,259.8 673.4,259.0 679.1,260.5 C684.8,262.0 682.8,261.2 687.1,264.0 C691.4,266.8 689.5,265.7 692.1,269.0 C694.7,272.3 693.6,269.0 694.9,274.0 C696.2,279.0 695.9,275.3 696.1,284.0 C696.3,292.7 695.8,294.7 695.6,300.1 L691.1,320.0 L690.6,335.0 L695.1,338.0 C696.8,339.7 698.1,338.0 700.1,343.0 C702.1,348.0 701.3,345.0 701.1,353.0 C700.9,361.0 700.1,362.3 699.6,367.0 L695.1,362.0 L689.1,359.5 L688.1,370.0 C687.8,373.3 688.1,373.3 687.1,380.0 C686.1,386.7 686.1,386.0 685.1,390.0 C684.1,394.0 686.1,387.3 684.1,392.0 C682.1,396.7 682.4,396.7 679.0,404.0 C675.6,411.3 677.7,407.7 674.0,414.0 C670.3,420.3 672.7,417.3 668.0,423.0 C663.3,428.7 666.0,426.7 660.0,431.0 C654.0,435.3 656.7,433.9 650.0,436.0 C643.3,438.1 643.3,436.8 640.0,437.2 L640.0,437.2 C637.9,436.8 636.5,437.6 633.6,436.0 C630.7,434.4 632.3,441.7 631.4,432.4 C630.5,423.1 631.1,416.1 631.0,408.0 L631.1,408.1 L632.9,409.1 L632.9,409.1 C630.3,407.8 629.7,408.1 625.1,405.1 C620.5,402.1 621.7,403.1 619.0,400.1 C616.3,397.1 617.3,402.7 617.0,396.0 C616.7,389.3 617.7,385.3 618.0,380.0 L619.0,357.0 L605.0,365.0 L606.0,350.0 L607.5,333.0 L593.0,341.0 L595.0,320.0 L596.0,300.1 C596.3,296.7 596.0,295.4 597.0,290.0 C598.0,284.6 596.3,287.3 599.0,284.0 C601.7,280.7 603.0,281.3 605.0,280.0 L575.0,277.8 L573.0,312.1 L573.0,312.1 L570.0,314.1Z" fill="#f8b407"/>
<g shape-rendering="crispEdges">
<path d="M672.4,154.2 L687,171 L669.8,185 L656.2,167.8Z" fill="none" stroke="#f6ae0d" stroke-width="1" />
<path d="M669.8,185 L666.9,221" fill="none" stroke="#f6ae0d" stroke-width="1" />
<rect x="865" y="310" width="2" height="2" fill="#f6ae0d"/><rect x="868" y="318" width="2" height="2" fill="#f6ae0d"/>
<path d="M386.4,290.6 L447,320 L451.4,351.2 L427.7,401.2 L395.6,398.1 L345.6,373.5Z" fill="none" stroke="#e8151a" stroke-width="1.1" />
<path d="M360.5,393 L426,413.5 L434,446 L418,497.5 L382,498 L332,482Z" fill="none" stroke="#1ce61c" stroke-width="1.1" />
<path d="M432.6,356.0 L423.1,373.1 L415.1,388.1" fill="none" stroke="#8a22ee" stroke-width="1.3" />
<path d="M410.6,450.0 L410.1,493.6" fill="none" stroke="#8a22ee" stroke-width="1.8" />
<path d="M576.1,444.1 L585.1,426.1 L559.1,383.6 L509.0,385.0 L487.0,428.1 L502.0,453.1" fill="none" stroke="#e8151a" stroke-width="1.1" />
<path d="M538.1,436.1 L567.7,455.7 L565.7,490.1 L535.1,506.1 L505.6,488.1 L507.0,452.5Z" fill="none" stroke="#1ce61c" stroke-width="1.1" />
<path d="M534.5,377.4 L551.7,390.0 L539.1,407.0 L521.5,394.4Z" fill="none" stroke="#f6ae0d" stroke-width="1" />
<path d="M551.7,390.0 L612.1,432.7" fill="none" stroke="#f6ae0d" stroke-width="1" />
<path d="M541.5,402.0 L536.1,424.1 L532.1,442.1 L531.1,451.1" fill="none" stroke="#8a22ee" stroke-width="1.4" />
<path d="M534.1,446.1 L536.1,470.1 L539.5,497.1" fill="none" stroke="#8a22ee" stroke-width="1.6" />
<path d="M675.2,404.4 L696.2,409.0 L704.6,438.1 L684.2,459.7 L654.1,453.1 L649.7,435.1" fill="none" stroke="#1ce61c" stroke-width="1.1" />
<path d="M687.2,381.6 L721.2,400.0 L721.8,408.0" fill="none" stroke="#e8151a" stroke-width="1.1" />
<circle cx="675.8" cy="431.7" r="1.3" fill="#8a22ee"/>
<path d="M746.8,357.0 L609.1,499.7" fill="none" stroke="#f6ae0d" stroke-width="1" />
<path d="M824.5,446.0 L676.0,578.1" fill="none" stroke="#f6ae0d" stroke-width="1.1" />
<path d="M770.1,494.1 L731.1,529.1" fill="none" stroke="#8a22ee" stroke-width="1.4" />
<path d="M930.3,478 L679,670.6" fill="none" stroke="#f6ae0d" stroke-width="1.1" />
<path d="M929.5,479.6 L836,553" fill="none" stroke="#f6ae0d" stroke-width="1" />
<path d="M823.7,560.0 L788.1,587.6" fill="none" stroke="#8a22ee" stroke-width="1.4" />
<path d="M873.6,518.8 L876.7,534.9 L891.4,527.6 L882.2,541.2 L897.7,546.5 L881.6,549.6 L888.9,564.3 L875.3,555.1 L870.0,570.6 L866.9,554.5 L852.2,561.8 L861.4,548.2 L845.9,542.9 L862.0,539.8 L854.7,525.1 L868.3,534.3Z" fill="none" stroke="#e8151a" stroke-width="1.1" />
<path d="M871.2,519.7 L875.4,535.5 L889.6,527.3 L881.4,541.5 L897.2,545.7 L881.4,549.9 L889.6,564.1 L875.4,555.9 L871.2,571.7 L867.0,555.9 L852.8,564.1 L861.0,549.9 L845.2,545.7 L861.0,541.5 L852.8,527.3 L867.0,535.5Z" fill="none" stroke="#1ce61c" stroke-width="1.1" />
<rect x="870.0" y="544.5" width="2.4" height="2.4" fill="#1ce61c"/><rect x="871.0" y="543.1" width="1.8" height="1.8" fill="#e8151a"/>
<path d="M916.7,669.6 L943.7,705.0 L977.1,676.0 L970.5,719.6 L1015.7,722.5 L979.7,749.5 L1009.7,783.5" fill="none" stroke="#e8151a" stroke-width="1.1" />
<circle cx="939.5" cy="745.5" r="1.5" fill="#e8151a"/>
<circle cx="964.3" cy="777.7" r="0.8" fill="#e8151a"/>
<path d="M897.1,742.5 L899.7,741.1" fill="none" stroke="#e8151a" stroke-width="1" />
<circle cx="689.5" cy="659.4" r="0.8" fill="#1ce61c"/>
<circle cx="675.1" cy="700.1" r="0.8" fill="#1ce61c"/>
<circle cx="639.3" cy="720.5" r="0.8" fill="#1ce61c"/>
<path d="M591.0,779.1 L627.1,758.7" fill="none" stroke="#1ce61c" stroke-width="1.1" />
<path d="M505.2,700.4 L531.3,725.5 L505.2,752.7 L479.7,726.2Z" fill="none" stroke="#e8151a" stroke-width="1" />
<path d="M504.2,699.4 L530.3,724.5 L504.2,751.7 L478.7,725.2Z" fill="none" stroke="#1ce61c" stroke-width="1" />
<rect x="503.3" y="724" width="2.4" height="2.4" fill="#1ce61c"/><rect x="505" y="723.6" width="1.6" height="1.6" fill="#e8151a"/>
<path d="M351.0,840.0 L534.5,962.1 L529.7,971.1 L344.4,848.6Z" fill="none" stroke="#1ce61c" stroke-width="1.1" />
<path d="M1181,705 L1275,913 L1272.5,913 L1181.6,710Z" fill="none" stroke="#e8151a" stroke-width="1.1" />
</g>
<g><circle cx="812.6" cy="4.4" r="1.7" fill="#bcdcf6"/><circle cx="812.6" cy="4.4" r="0.6" fill="#4a5a6a"/><circle cx="817.9" cy="3.2" r="2.1" fill="#bcdcf6"/><circle cx="817.9" cy="3.2" r="0.8" fill="#4a5a6a"/><rect x="814.7" y="6.8" width="5.6" height="3.3" fill="#161616"/><path d="M820.4,8.5 L823.8,6.8 V10.1Z" fill="#161616"/><rect x="813.1" y="8.1" width="1.7" height="1.6" fill="#bcdcf6"/></g>
<defs>
<radialGradient id="c4dring" cx="0.4" cy="0.35" r="0.75"><stop offset="0" stop-color="#ffffff"/><stop offset="0.7" stop-color="#e4e6ee"/><stop offset="1" stop-color="#9a9fb4"/></radialGradient>
<radialGradient id="c4dball" cx="0.45" cy="0.55" r="0.6"><stop offset="0" stop-color="#5a78e8"/><stop offset="0.45" stop-color="#1b2a8c"/><stop offset="1" stop-color="#05061e"/></radialGradient>
</defs>
<circle cx="1040" cy="30.2" r="7.8" fill="url(#c4dring)"/>
<ellipse cx="1039.6" cy="31" rx="6.2" ry="5.3" transform="rotate(-35 1039.6 31)" fill="#0c0e3a"/>
<ellipse cx="1040.2" cy="30.2" rx="4.3" ry="3.7" transform="rotate(-35 1040.2 30.2)" fill="url(#c4dball)"/>
<path d="M1042.5,25 L1045.5,23.2 L1046.8,26 L1044.5,28Z" fill="#6f7fd6" opacity=".85"/>
<path d="M1034.5,35 Q1038,38.5 1043,36" stroke="#7a86ff" stroke-width="1.4" fill="none" opacity=".8"/>
<path d="M1408,30.5 H1418" stroke="#000" stroke-width="1"/>
<rect x="1453.5" y="25.5" width="9" height="9" fill="none" stroke="#000" stroke-width="1"/>
<path d="M1499.3,25.3 L1509,35 M1509,25.3 L1499.3,35" stroke="#000" stroke-width="1.1"/>
<path d="M1030.5,49.5 l-1.2,1.2 M1032.5,49.5 l-1.2,1.2 M1034.5,49.5 l-1.2,1.2 M1036.5,49.5 l-1.2,1.2 M1038.5,49.5 l-1.2,1.2 M1040.5,49.5 l-1.2,1.2 M1030.5,51.5 l-1.2,1.2 M1032.5,51.5 l-1.2,1.2 M1034.5,51.5 l-1.2,1.2 M1036.5,51.5 l-1.2,1.2 M1038.5,51.5 l-1.2,1.2 M1040.5,51.5 l-1.2,1.2 M1030.5,53.5 l-1.2,1.2 M1032.5,53.5 l-1.2,1.2 M1034.5,53.5 l-1.2,1.2 M1036.5,53.5 l-1.2,1.2 M1038.5,53.5 l-1.2,1.2 M1040.5,53.5 l-1.2,1.2 M1030.5,55.5 l-1.2,1.2 M1032.5,55.5 l-1.2,1.2 M1034.5,55.5 l-1.2,1.2 M1036.5,55.5 l-1.2,1.2 M1038.5,55.5 l-1.2,1.2 M1040.5,55.5 l-1.2,1.2 M1030.5,57.5 l-1.2,1.2 M1032.5,57.5 l-1.2,1.2 M1034.5,57.5 l-1.2,1.2 M1036.5,57.5 l-1.2,1.2 M1038.5,57.5 l-1.2,1.2 M1040.5,57.5 l-1.2,1.2 M1030.5,59.5 l-1.2,1.2 M1032.5,59.5 l-1.2,1.2 M1034.5,59.5 l-1.2,1.2 M1036.5,59.5 l-1.2,1.2 M1038.5,59.5 l-1.2,1.2 M1040.5,59.5 l-1.2,1.2" stroke="#2e2e2e" stroke-width="0.75" fill="none"/>
<path d="M1512.6,53.2 H1521 L1516.8,57.4Z" fill="#d2d2d2"/>
<rect x="1480" y="110" width="11" height="2.2" fill="#2b2b2b"/>
<rect x="1480.5" y="112.5" width="10" height="11.7" fill="none" stroke="#2b2b2b" stroke-width="1"/>
<path d="M1482.5,118.3 H1488.7 M1485.6,115.2 V121.4" stroke="#2b2b2b" stroke-width="1.2"/>
<path d="M1505.0,117.3 l2.3,-2.1 l2.3,2.1 l-2.3,2.1z" transform="rotate(0 1502.8 117.3)" fill="#2b2b2b"/>
<path d="M1505.0,117.3 l2.3,-2.1 l2.3,2.1 l-2.3,2.1z" transform="rotate(90 1502.8 117.3)" fill="#2b2b2b"/>
<path d="M1505.0,117.3 l2.3,-2.1 l2.3,2.1 l-2.3,2.1z" transform="rotate(180 1502.8 117.3)" fill="#2b2b2b"/>
<path d="M1505.0,117.3 l2.3,-2.1 l2.3,2.1 l-2.3,2.1z" transform="rotate(270 1502.8 117.3)" fill="#2b2b2b"/>
<path d="M1517.2,110.5 l2.6,2.9 h-1.8 v5.4 h4.4 l-5.2,5.7 l-5.2,-5.7 h4.4 v-5.4 h-1.8z" fill="#2b2b2b"/>
<path d="M1527.5,64 V636.5 H1024" fill="none" stroke="#5e5e5e" stroke-width="1"/>
<rect x="1512" y="132" width="10" height="487.5" rx="5" fill="#414141"/>
<rect x="1025.5" y="624" width="482.5" height="10" rx="5" fill="#414141"/>
<rect x="1048" y="157" width="437" height="436.5" fill="#555555"/>
<rect x="1048" y="577" width="437" height="16.5" fill="#5b5b5b"/>
<rect x="1048" y="576" width="437" height="1" fill="#c8901c"/>
<rect x="1048" y="580" width="437" height="1" fill="#8a6c34"/>
<path d="M1048.5,581 V593 H1484.5 V581" stroke="#6a6a6a" stroke-width="0.8" fill="none"/>
<path d="M1358.2,307.0 L1362.5,306.7 L1366.8,306.7 L1371.2,307.1 L1375.4,307.8 L1379.6,308.9 L1383.8,310.2 L1387.8,311.9 L1391.6,313.9 L1395.3,316.2 L1398.8,318.7 L1402.1,321.5 L1405.2,324.6 L1408.1,327.9 L1410.6,331.4 L1412.9,335.0 L1414.9,338.9 L1416.6,342.9 L1418.0,347.0 L1419.1,351.2 L1419.8,355.5 L1420.2,359.8 L1420.3,364.1 L1420.1,368.4 L1419.5,372.7 L1438.7,376.1 L1439.5,370.3 L1439.8,364.5 L1439.7,358.7 L1439.2,352.9 L1438.2,347.1 L1436.7,341.4 L1434.9,335.9 L1432.6,330.5 L1429.9,325.4 L1426.8,320.4 L1423.3,315.7 L1419.5,311.3 L1415.3,307.2 L1410.9,303.4 L1406.2,299.9 L1401.2,296.9 L1396.0,294.2 L1390.6,292.0 L1385.1,290.1 L1379.4,288.7 L1373.6,287.8 L1367.8,287.3 L1362.0,287.2 L1356.1,287.6Z" fill="#f29e9b"/>
<path d="M1357.1,297.3 L1362.2,296.9 L1367.3,297.0 L1372.4,297.5 L1377.4,298.3 L1382.3,299.5 L1387.2,301.1 L1391.9,303.1 L1396.4,305.4 L1400.7,308.1 L1404.9,311.0 L1408.7,314.3 L1412.4,317.9 L1415.7,321.8 L1418.7,325.9 L1421.4,330.2 L1423.7,334.7 L1425.7,339.4 L1427.4,344.2 L1428.6,349.1 L1429.5,354.2 L1430.0,359.2 L1430.1,364.3 L1429.8,369.4 L1429.1,374.4 L1438.7,376.1 L1439.5,370.3 L1439.8,364.5 L1439.7,358.7 L1439.2,352.9 L1438.2,347.1 L1436.7,341.4 L1434.9,335.9 L1432.6,330.5 L1429.9,325.4 L1426.8,320.4 L1423.3,315.7 L1419.5,311.3 L1415.3,307.2 L1410.9,303.4 L1406.2,299.9 L1401.2,296.9 L1396.0,294.2 L1390.6,292.0 L1385.1,290.1 L1379.4,288.7 L1373.6,287.8 L1367.8,287.3 L1362.0,287.2 L1356.1,287.6Z" fill="#f8c2b4"/>
<circle cx="1357.1" cy="297.3" r="9.75" fill="#f29e9b"/>
<path d="M1347.35,297.3 A9.75,9.75 0 0 1 1358.1,287.6 L1358.1,297.3 Z" fill="#f8c2b4"/>
<path d="M1177.7,294.6 L1178.4,299.3 L1178.6,304.0 L1178.3,308.8 L1177.5,313.5 L1176.1,318.0 L1174.3,322.4 L1172.0,326.6 L1169.2,330.4 L1166.0,334.0 L1162.5,337.2 L1158.6,339.9 L1154.4,342.2 L1150.1,344.1 L1145.5,345.4 L1140.8,346.3 L1136.1,346.6 L1131.3,346.4 L1126.6,345.7 L1122.0,344.4 L1117.6,342.7 L1113.4,340.5 L1109.4,337.8 L1105.8,334.7 L1102.6,331.2 L1087.6,343.8 L1092.3,348.8 L1097.6,353.3 L1103.3,357.2 L1109.4,360.4 L1115.9,362.9 L1122.5,364.7 L1129.4,365.8 L1136.3,366.1 L1143.2,365.6 L1150.0,364.4 L1156.6,362.5 L1163.0,359.8 L1169.0,356.4 L1174.7,352.4 L1179.8,347.8 L1184.4,342.6 L1188.4,337.0 L1191.8,331.0 L1194.5,324.6 L1196.5,318.0 L1197.7,311.2 L1198.1,304.3 L1197.8,297.3 L1196.8,290.5Z" fill="#f29e9b"/>
<path d="M1177.7,294.6 L1178.4,299.3 L1178.6,304.0 L1178.3,308.8 L1177.5,313.5 L1176.1,318.0 L1174.3,322.4 L1172.0,326.6 L1169.2,330.4 L1166.0,334.0 L1162.5,337.2 L1158.6,339.9 L1154.4,342.2 L1150.1,344.1 L1145.5,345.4 L1140.8,346.3 L1136.1,346.6 L1131.3,346.4 L1126.6,345.7 L1122.0,344.4 L1117.6,342.7 L1113.4,340.5 L1109.4,337.8 L1105.8,334.7 L1102.6,331.2 L1095.1,337.5 L1099.1,341.7 L1103.5,345.5 L1108.3,348.8 L1113.5,351.5 L1118.9,353.7 L1124.6,355.2 L1130.3,356.1 L1136.2,356.4 L1142.0,356.0 L1147.7,354.9 L1153.3,353.3 L1158.7,351.0 L1163.8,348.2 L1168.6,344.8 L1172.9,340.9 L1176.8,336.5 L1180.2,331.8 L1183.0,326.7 L1185.3,321.3 L1187.0,315.7 L1188.0,310.0 L1188.4,304.1 L1188.1,298.3 L1187.2,292.5Z" fill="#f8b5a2"/>
<circle cx="1187.2" cy="292.5" r="9.75" fill="#f8b5a2"/>
<path d="M1187.2,282.75 A9.75,9.75 0 0 1 1196.95,293.5 L1187.2,293.5 Z" fill="#f29e9b"/>
<path d="M1165.0,500.1 L1162.8,515.1 L1160.8,530.1 L1163.6,515.0 L1162.1,534.5 L1163.6,542.0 L1180.1,550.3 L1183.8,522.5 L1183.1,522.6 L1186.1,507.6Z" fill="#f29e9b" />
<path d="M1165.0,500.1 L1162.8,515.1 L1160.8,530.1 L1163.6,515.0 L1162.1,534.5 L1163.6,542.0 L1174.1,546.5 L1174.4,515.0 L1174.8,522.6 L1175.6,504.6Z" fill="#f8b5a2" />
<path d="M1240.1,374.0 C1237.1,376.0 1238.6,375.0 1231.1,380.0 C1223.6,385.0 1226.6,381.5 1217.6,389.0 C1208.6,396.5 1212.6,392.5 1204.1,402.5 C1195.6,412.5 1200.1,407.0 1192.1,419.0 C1184.1,431.0 1187.6,425.0 1180.1,438.5 C1172.6,452.0 1175.5,446.5 1169.5,459.5 C1163.5,472.5 1166.5,465.6 1162.0,477.6 C1157.5,489.6 1158.0,489.6 1156.0,495.6 L1198.1,510.6 L1198.1,510.6 C1200.1,506.6 1199.6,508.1 1204.1,498.6 C1208.6,489.1 1205.6,494.6 1211.6,482.1 C1217.6,469.6 1214.6,474.1 1222.1,461.1 C1229.6,448.1 1226.1,454.0 1234.1,443.0 C1242.1,432.0 1239.1,436.5 1246.1,428.0 C1253.1,419.5 1247.1,427.5 1255.1,417.5 C1263.1,407.5 1265.1,404.5 1270.1,398.0Z" fill="#19917f"/>
<path d="M1198.1,510.6 L1181.6,505.3 L1177.1,499.3 L1171.1,501.6 L1156.0,495.6Z" fill="#19917f"/>
<path d="M1240.1,374.0 C1237.1,376.0 1238.6,375.0 1231.1,380.0 C1223.6,385.0 1226.6,381.5 1217.6,389.0 C1208.6,396.5 1212.6,392.5 1204.1,402.5 C1195.6,412.5 1200.1,407.0 1192.1,419.0 C1184.1,431.0 1187.6,425.0 1180.1,438.5 C1172.6,452.0 1175.5,446.5 1169.5,459.5 C1163.5,472.5 1166.5,465.6 1162.0,477.6 C1157.5,489.6 1158.0,489.6 1156.0,495.6 L1171.1,501.6 L1177.1,499.3 L1180.1,500.1 L1180.1,500.1 C1181.1,496.1 1180.1,498.1 1183.1,488.1 C1186.1,478.1 1184.1,482.1 1189.1,470.1 C1194.1,458.1 1191.1,464.5 1198.1,452.0 C1205.1,439.5 1201.1,445.0 1210.1,432.5 C1219.1,420.0 1212.6,426.5 1225.1,414.5 C1237.6,402.5 1237.6,405.0 1247.6,396.5 C1257.6,388.0 1252.6,391.5 1255.1,389.0Z" fill="#0fa19b"/>
<path d="M1349.8,516.3 L1364.1,527.6 L1380.6,536.6 L1394.1,524.6 L1377.6,512.6 L1362.6,501.3Z" fill="#f29e9b" />
<path d="M1349.8,516.3 L1364.1,527.6 L1380.6,536.6 L1385.8,531.3 L1355.1,509.6Z" fill="#f8b5a2" />
<path d="M1247.6,396.5 C1250.1,403.5 1254.3,408.8 1255.1,417.5 C1255.9,426.2 1248.7,415.3 1250.0,422.5 C1251.3,429.7 1252.5,428.0 1259.0,439.0 C1265.5,450.0 1262.0,444.5 1269.5,455.5 C1277.0,466.5 1273.0,461.5 1281.5,472.0 C1290.0,482.5 1285.5,477.1 1295.0,487.1 C1304.5,497.1 1300.0,493.1 1310.0,502.1 C1320.0,511.1 1314.5,506.6 1325.0,514.1 C1335.5,521.6 1336.1,521.1 1341.6,524.6 L1349.1,516.3 L1352.8,511.8 L1353.6,504.3 L1361.8,501.3 L1371.6,490.1 C1368.1,486.1 1369.1,486.5 1361.1,478.0 C1353.1,469.5 1356.6,474.0 1347.6,464.5 C1338.6,455.0 1343.1,460.5 1334.1,449.5 C1325.1,438.5 1328.5,442.5 1320.5,431.5 C1312.5,420.5 1317.0,427.0 1310.0,416.5 C1303.0,406.0 1306.3,413.2 1299.5,400.0 C1292.7,386.8 1292.9,384.7 1289.6,377.0Z" fill="#19917f"/>
<path d="M1247.6,396.5 C1250.1,403.5 1254.3,408.8 1255.1,417.5 C1255.9,426.2 1248.7,415.3 1250.0,422.5 C1251.3,429.7 1252.5,428.0 1259.0,439.0 C1265.5,450.0 1262.0,444.5 1269.5,455.5 C1277.0,466.5 1273.0,461.5 1281.5,472.0 C1290.0,482.5 1285.5,477.1 1295.0,487.1 C1304.5,497.1 1300.0,493.1 1310.0,502.1 C1320.0,511.1 1314.5,506.6 1325.0,514.1 C1335.5,521.6 1336.1,521.1 1341.6,524.6 L1349.1,516.3 L1352.8,511.8 L1355.1,503.6 C1351.1,499.1 1352.1,499.1 1343.1,490.1 C1334.1,481.1 1338.0,486.5 1328.0,476.5 C1318.0,466.5 1322.5,471.5 1313.0,460.0 C1303.5,448.5 1308.0,454.5 1299.5,442.0 C1291.0,429.5 1295.0,436.5 1287.5,422.5 C1280.0,408.5 1282.8,409.2 1277.0,400.0 C1271.2,390.8 1272.4,396.7 1270.1,395.0Z" fill="#0fa19b"/>
<path d="M1289.6,379.0 L1281.3,377.1 L1275.3,379.0 L1267.7,382.4 L1272.3,395.2 L1287.3,430.0 L1315.2,430.0 L1307.7,414.8 L1300.9,401.2 L1294.8,389.2Z" fill="#19917f" />
<path d="M1267.7,382.4 L1257.2,387.7 L1251.2,391.1 L1245.9,392.2 L1248.9,394.4 L1254.2,406.5 L1260.2,417.8 L1266.2,430.0 L1287.3,430.0 L1279.0,410.3 L1272.3,395.2Z" fill="#0fa19b" />
<path d="M1249.7,368.8 L1237.6,375.6 L1226.3,383.9 L1215.0,393.7 L1215.0,417.8 L1248.1,395.2 L1245.9,392.2 L1245.1,387.7 L1245.5,381.6 L1247.4,375.6 L1250.0,371.8Z" fill="#0fa19b" />
<path d="M1248.1,395.2 L1215.0,417.8 L1215.0,430.0 L1245.1,430.0 L1255.7,414.8 L1248.9,394.4Z" fill="#19917f" />
<path d="M1260.5,269.6 L1260.5,280.1 L1258.3,290.6 L1257.9,288.3 L1275.3,289.0 L1278.6,274.1 L1280.1,260.6Z" fill="#f29e9b" />
<path d="M1260.5,269.6 L1260.5,280.1 L1258.3,290.6 L1257.9,288.3 L1269.2,288.3 L1269.5,277.1 L1271.1,268.1Z" fill="#f8b5a2" />
<path d="M1257.2,289.8 C1255.7,291.6 1256.2,291.1 1252.7,295.1 C1249.2,299.1 1250.9,297.5 1246.6,301.8 C1242.3,306.1 1243.7,304.1 1239.9,307.9 C1236.1,311.7 1237.4,309.6 1235.3,313.1 C1233.2,316.6 1233.9,314.9 1233.5,318.4 C1233.1,321.9 1232.8,320.4 1234.2,323.7 C1235.6,327.0 1235.3,325.4 1237.6,328.2 C1239.9,331.0 1239.6,329.0 1241.0,332.0 C1242.4,335.0 1241.3,333.3 1241.7,337.3 C1242.1,341.3 1241.6,339.2 1242.1,344.0 C1242.6,348.8 1242.1,346.3 1243.2,351.6 C1244.3,356.9 1244.6,358.0 1245.5,360.0 C1246.4,362.0 1244.8,355.8 1245.9,357.5 C1247.0,359.2 1247.5,360.3 1248.9,365.1 C1250.3,369.9 1250.5,368.3 1250.0,371.8 C1249.5,375.3 1248.9,372.3 1247.4,375.6 C1245.9,378.9 1246.3,377.6 1245.5,381.6 C1244.7,385.6 1245.0,384.2 1245.1,387.7 C1245.2,391.2 1245.6,390.7 1245.9,392.2 L1251.2,391.1 C1253.2,390.0 1251.7,390.6 1257.2,387.7 C1262.7,384.8 1261.7,385.3 1267.7,382.4 C1273.7,379.5 1270.8,380.8 1275.3,379.0 C1279.8,377.2 1277.5,377.5 1281.3,377.1 C1285.1,376.7 1283.8,377.3 1286.6,377.9 C1289.4,378.5 1288.6,378.6 1289.6,379.0 L1287.3,374.1 L1282.8,369.6 L1280.2,367.3 L1280.2,357.5 L1280.2,357.5 C1280.2,354.3 1280.2,367.1 1280.2,347.8 C1280.2,328.5 1280.5,317.7 1280.2,299.6 C1279.9,281.5 1280.5,297.1 1279.4,293.6 C1278.3,290.1 1279.2,291.4 1276.8,289.0 C1274.4,286.6 1275.8,287.4 1272.3,286.4 C1268.8,285.4 1270.0,285.7 1266.2,285.9 C1262.4,286.1 1262.7,286.6 1261.0,286.9Z" fill="#e44b31"/>
<path d="M1242.9,333.5 L1254.2,333.5" stroke="#c93a2a" stroke-width="1" fill="none"/>
<path d="M1267.0,287.5 C1263.6,288.6 1264.5,288.5 1260.2,292.1 C1255.9,295.7 1256.5,294.9 1252.7,299.6 C1248.9,304.3 1249.0,303.9 1247.4,307.9 C1245.8,311.9 1246.5,309.9 1247.4,312.8 C1248.3,315.7 1247.5,315.3 1250.4,317.7 C1253.3,320.1 1252.5,319.9 1257.2,320.7 C1261.9,321.5 1261.5,321.7 1266.2,320.3 C1270.9,318.9 1270.1,319.3 1273.0,316.2 C1275.9,313.1 1275.0,314.6 1276.0,310.1 C1277.0,305.6 1276.9,306.5 1276.4,301.1 C1276.0,295.7 1276.0,295.9 1274.5,292.1 C1273.0,288.3 1273.8,289.7 1271.5,288.3 C1269.2,286.9 1270.4,286.4 1267.0,287.5Z" fill="#f8b5a2" />
<path d="M1254.5,216.3 L1249.7,226.0 L1245.1,238.0 L1242.1,241.5 L1238.6,242.6 L1242.5,244.1 L1241.0,250.1 L1238.6,256.1 L1238.0,262.1 L1241.0,268.1 L1247.0,271.8 L1254.5,272.9 L1262.0,271.4 L1269.5,268.4 L1275.6,263.9 L1281.6,262.1 L1283.1,235.0 L1274.1,217.0Z" fill="#f8b5a2" />
<path d="M1256.8,226.0 C1251.2,230.8 1254.7,231.6 1253.0,238.0 C1251.3,244.4 1250.8,243.3 1250.3,250.1 C1249.8,256.9 1249.7,257.7 1251.2,263.6 C1252.7,269.5 1253.1,270.2 1256.0,272.3 C1258.9,274.4 1258.4,272.4 1262.0,271.4 C1265.6,270.4 1265.9,270.4 1269.5,268.4 C1273.1,266.4 1272.4,265.6 1275.6,263.9 C1278.8,262.2 1279.6,269.8 1281.6,262.1 C1283.6,254.4 1285.1,246.2 1283.1,235.0 C1281.1,223.8 1281.1,222.4 1274.1,220.0 C1267.1,217.6 1262.4,221.2 1256.8,226.0Z" fill="#f29e9b" />
<path d="M1241.9,241.1 L1238.3,242.6 L1242.1,243.9Z" fill="#ee7d7a" />
<defs><radialGradient id="blush"><stop offset="0" stop-color="#ee8585"/><stop offset="1" stop-color="#f29e9b"/></radialGradient></defs>
<circle cx="1272.6" cy="248.6" r="4.6" fill="url(#blush)"/>
<ellipse cx="1252.6" cy="236.1" rx="2.4" ry="2.6" fill="#0aa6cf"/>
<path d="M1252.7,228.4 C1253.8,228.3 1254.0,227.5 1256.0,228.1 C1258.0,228.7 1257.8,229.5 1258.7,230.2" stroke="#e0a820" stroke-width="0.9" fill="none"/>
<path d="M1238.3,254.7 C1239.1,254.9 1239.2,255.4 1240.7,255.2 C1242.2,255.0 1242.1,254.5 1242.8,254.1" stroke="#e05aa0" stroke-width="1.1" fill="none"/>
<path d="M1247.0,219.3 C1247.4,216.5 1246.2,216.0 1248.2,211.0 C1250.2,206.0 1248.9,207.9 1253.0,204.3 C1257.1,200.7 1255.7,201.6 1260.5,200.1 C1265.3,198.6 1260.8,198.3 1267.3,199.9 C1273.8,201.5 1270.8,201.0 1280.1,205.0 C1289.4,209.0 1287.1,208.2 1295.1,211.8 C1303.1,215.4 1298.1,214.5 1304.1,215.8 C1310.1,217.1 1307.1,216.3 1313.1,215.8 C1319.1,215.3 1316.6,215.0 1322.1,214.3 C1327.6,213.6 1324.6,212.9 1329.6,213.7 C1334.6,214.5 1333.1,213.6 1337.1,216.7 C1341.1,219.8 1339.4,217.9 1341.6,223.0 C1343.8,228.1 1343.7,225.0 1343.8,232.0 C1343.9,239.0 1344.0,235.6 1341.9,244.1 C1339.8,252.6 1340.9,249.6 1337.4,257.6 C1333.9,265.6 1335.1,261.1 1331.4,268.1 C1327.7,275.1 1328.6,273.1 1326.3,278.6 C1324.0,284.1 1324.4,281.1 1324.5,284.6 C1324.6,288.1 1324.6,286.5 1326.6,289.1 C1328.6,291.7 1329.2,291.3 1330.5,292.4 L1322.8,295.4 C1320.1,295.6 1320.3,296.6 1314.6,296.0 C1308.9,295.4 1311.1,296.4 1305.6,293.6 C1300.1,290.8 1302.4,292.1 1298.1,287.6 C1293.8,283.1 1295.3,285.6 1292.8,280.1 C1290.3,274.6 1290.8,276.6 1290.6,271.1 C1290.4,265.6 1289.5,269.6 1292.1,263.6 C1294.7,257.6 1296.3,256.6 1298.4,253.1 L1295.1,256.1 C1292.6,257.7 1292.6,258.3 1287.6,260.9 C1282.6,263.5 1283.7,265.0 1280.1,263.9 C1276.5,262.8 1278.2,262.2 1276.8,257.6 C1275.4,253.0 1276.2,252.6 1275.9,250.1 L1272.3,244.1 C1271.0,243.2 1270.1,243.9 1268.3,241.4 C1266.5,238.9 1268.3,239.5 1266.8,236.5 C1265.3,233.5 1265.6,235.2 1263.8,232.3 C1262.0,229.4 1263.2,230.3 1261.4,227.8 C1259.6,225.3 1260.3,227.3 1258.4,224.8 C1256.5,222.3 1256.9,223.0 1255.7,220.3 C1254.5,217.6 1256.4,216.9 1254.8,216.7 C1253.2,216.5 1252.1,218.7 1250.8,219.7Z" fill="#fcca38"/>
<path d="M1249.7,219.7 C1250.1,217.3 1249.1,216.8 1250.8,212.5 C1252.5,208.2 1251.3,209.9 1254.8,206.8 C1258.3,203.7 1257.2,204.3 1261.4,203.1 C1265.6,201.9 1261.1,201.5 1267.3,203.1 C1273.5,204.7 1270.8,204.1 1280.1,208.0 C1289.4,211.9 1287.1,211.2 1295.1,214.8 C1303.1,218.4 1298.1,217.5 1304.1,218.8 C1310.1,220.1 1307.1,219.4 1313.1,218.8 C1319.1,218.2 1316.6,217.8 1322.1,217.0 C1327.6,216.2 1324.9,215.8 1329.6,216.4 C1334.3,217.0 1332.7,216.1 1336.3,218.8 C1339.9,221.5 1338.3,219.8 1340.5,224.5 C1342.7,229.2 1342.3,226.3 1342.8,232.8 C1343.3,239.3 1343.7,235.8 1341.9,244.1 C1340.1,252.4 1340.9,249.6 1337.4,257.6 C1333.9,265.6 1335.1,261.1 1331.4,268.1 C1327.7,275.1 1328.6,273.1 1326.3,278.6 C1324.0,284.1 1324.4,281.1 1324.5,284.6 C1324.6,288.1 1324.6,286.5 1326.6,289.1 C1328.6,291.7 1329.2,291.3 1330.5,292.4 L1322.8,295.4 C1320.1,295.6 1320.3,296.6 1314.6,296.0 C1308.9,295.4 1311.1,296.4 1305.6,293.6 C1300.1,290.8 1302.4,292.1 1298.1,287.6 C1293.8,283.1 1295.3,285.6 1292.8,280.1 C1290.3,274.6 1290.8,276.6 1290.6,271.1 C1290.4,265.6 1289.5,269.6 1292.1,263.6 C1294.7,257.6 1296.3,256.6 1298.4,253.1 L1295.1,256.1 C1292.6,257.7 1292.6,258.3 1287.6,260.9 C1282.6,263.5 1283.7,265.0 1280.1,263.9 C1276.5,262.8 1278.2,262.2 1276.8,257.6 C1275.4,253.0 1276.2,252.6 1275.9,250.1 L1272.3,244.1 C1271.0,243.2 1270.1,243.9 1268.3,241.4 C1266.5,238.9 1268.3,239.5 1266.8,236.5 C1265.3,233.5 1265.6,235.2 1263.8,232.3 C1262.0,229.4 1263.2,230.3 1261.4,227.8 C1259.6,225.3 1260.3,227.3 1258.4,224.8 C1256.5,222.3 1256.9,223.0 1255.7,220.3 C1254.5,217.6 1256.4,216.9 1254.8,216.7 C1253.2,216.5 1252.1,218.7 1250.8,219.7Z" fill="#f8b716"/>
<path d="M1304.4,215.8 C1306.9,211.9 1313.8,212.1 1317.6,212.1 C1321.4,212.1 1319.6,212.6 1320.9,215.8 C1322.2,219.0 1323.1,222.8 1323.0,226.0 C1322.9,229.2 1323.6,228.0 1320.6,229.3 C1317.6,230.6 1313.2,231.8 1310.1,231.7 C1306.9,231.6 1308.4,232.7 1307.1,229.0 C1305.8,225.3 1302.0,219.7 1304.4,215.8Z" fill="#8b4f98" />
<path d="M1304.4,215.8 C1306.5,214.1 1313.8,212.1 1317.6,212.1 C1321.4,212.1 1323.0,214.1 1320.9,215.8 C1318.8,217.5 1312.4,219.3 1308.6,219.3 C1304.8,219.3 1302.3,217.5 1304.4,215.8Z" fill="#9c5fa8" />
<path d="M1115.8,536.8 C1116.1,535.3 1115.4,535.1 1116.7,532.3 C1118.0,529.5 1117.1,530.4 1119.7,528.5 C1122.3,526.6 1120.4,526.9 1124.5,526.7 C1128.6,526.5 1125.5,525.7 1132.0,527.9 C1138.5,530.1 1136.1,529.5 1144.1,533.3 C1152.1,537.1 1152.1,537.3 1156.1,539.3 L1163.6,533.3 L1162.4,540.2 L1162.4,540.2 C1164.4,541.4 1163.0,541.1 1168.4,543.8 C1173.8,546.5 1174.6,545.6 1178.6,548.3 C1182.6,551.0 1180.3,548.9 1180.4,551.9 C1180.5,554.9 1180.4,553.6 1178.9,557.3 C1177.4,561.0 1177.6,560.7 1175.9,563.0 C1174.2,565.3 1174.5,563.8 1173.8,564.2Z" fill="#9c62a8"/>
<path d="M1113.7,539.3 L1115.5,536.5 L1173.8,564.2 L1172.0,568.7Z" fill="#aab8ea" />
<path d="M1115.8,539.3 L1172.3,566.3" stroke="#5878c8" stroke-width="1" fill="none"/>
<circle cx="1153.8" cy="535.3" r="3.6" fill="#555555" stroke="#9c62a8" stroke-width="1.6"/>
<rect x="1138.1999999999998" y="534.9" width="1.8" height="1" fill="#c9a4d2" transform="rotate(25 1139.1 535.4)"/>
<rect x="1142.6" y="536.6" width="1.8" height="1" fill="#c9a4d2" transform="rotate(25 1143.5 537.1)"/>
<rect x="1146.8999999999999" y="538.4" width="1.8" height="1" fill="#c9a4d2" transform="rotate(25 1147.8 538.9)"/>
<rect x="1150.8" y="540.2" width="1.8" height="1" fill="#c9a4d2" transform="rotate(25 1151.7 540.7)"/>
<path d="M1397.6,524.8 C1402.0,523.1 1401.4,526.3 1403.6,528.5 C1405.8,530.7 1408.1,533.3 1408.4,536.0 C1408.7,538.7 1408.2,538.7 1405.1,542.0 C1402.0,545.3 1397.9,548.7 1393.1,552.5 C1388.3,556.3 1385.3,558.7 1381.1,560.8 C1376.9,562.9 1378.0,562.5 1372.0,563.0 C1366.0,563.5 1355.5,564.0 1351.0,563.3 C1346.5,562.6 1349.4,561.0 1349.5,559.3 C1349.6,557.6 1350.0,556.3 1351.3,554.8 C1352.6,553.3 1353.5,552.7 1355.8,551.9 C1358.1,551.1 1360.1,551.5 1363.0,551.0 C1365.9,550.5 1368.3,550.4 1370.5,549.5 C1372.7,548.6 1373.8,548.0 1373.8,546.5 C1373.8,545.0 1370.3,543.8 1370.5,542.0 C1370.7,540.2 1373.9,539.1 1375.0,537.5 C1376.1,535.9 1374.8,534.3 1376.2,534.2 C1377.6,534.1 1377.5,539.1 1381.8,537.2 C1386.1,535.3 1393.2,526.5 1397.6,524.8Z" fill="#9c62a8" />
<path d="M1412.0,537.5 C1412.3,538.5 1412.7,539.8 1410.5,542.3 C1408.3,544.8 1403.0,549.4 1399.1,552.8 C1395.2,556.2 1390.6,560.1 1387.1,562.6 C1383.6,565.1 1380.5,566.7 1378.0,567.8 C1375.5,568.9 1376.6,568.8 1372.0,569.0 C1367.4,569.2 1353.9,570.0 1350.3,569.0 C1346.7,568.0 1346.7,564.3 1350.3,563.3 C1353.9,562.3 1366.9,563.4 1372.0,563.0 C1377.1,562.6 1377.6,562.5 1381.1,560.8 C1384.6,559.0 1389.1,555.6 1393.1,552.5 C1397.1,549.4 1402.5,544.8 1405.1,542.0 C1407.6,539.2 1407.2,536.8 1408.4,536.0 C1409.6,535.2 1411.7,536.5 1412.0,537.5Z" fill="#aab8ea" />
<path d="M1410.3,539.3 C1406.9,542.6 1404.2,546.0 1397.6,551.8 C1391.0,557.6 1391.2,557.4 1385.6,561.2 C1380.0,565.0 1380.5,564.5 1376.5,566.0 C1372.5,567.5 1377.1,566.7 1370.5,566.9 C1363.9,567.1 1356.8,566.9 1351.8,566.9" stroke="#5878c8" stroke-width="0.9" fill="none"/>
<circle cx="1375.5" cy="542.8" r="3.2" fill="#555555" stroke="#9c62a8" stroke-width="1.5"/>
<path d="M1342.3,275.8 L1365.6,275.5 L1377.6,295.3 L1369.3,314.0 L1344.5,315.2 L1333.3,297.5Z" fill="#a92c2c" />
<clipPath id="cl1"><path d="M1342.3,275.8 L1365.6,275.5 L1377.6,295.3 L1369.3,314.0 L1344.5,315.2 L1333.3,297.5Z"/></clipPath><g clip-path="url(#cl1)"><path d="M1358.2,307.0 L1362.5,306.7 L1366.8,306.7 L1371.2,307.1 L1375.4,307.8 L1379.6,308.9 L1383.8,310.2 L1387.8,311.9 L1391.6,313.9 L1395.3,316.2 L1398.8,318.7 L1402.1,321.5 L1405.2,324.6 L1408.1,327.9 L1410.6,331.4 L1412.9,335.0 L1414.9,338.9 L1416.6,342.9 L1418.0,347.0 L1419.1,351.2 L1419.8,355.5 L1420.2,359.8 L1420.3,364.1 L1420.1,368.4 L1419.5,372.7 L1438.7,376.1 L1439.5,370.3 L1439.8,364.5 L1439.7,358.7 L1439.2,352.9 L1438.2,347.1 L1436.7,341.4 L1434.9,335.9 L1432.6,330.5 L1429.9,325.4 L1426.8,320.4 L1423.3,315.7 L1419.5,311.3 L1415.3,307.2 L1410.9,303.4 L1406.2,299.9 L1401.2,296.9 L1396.0,294.2 L1390.6,292.0 L1385.1,290.1 L1379.4,288.7 L1373.6,287.8 L1367.8,287.3 L1362.0,287.2 L1356.1,287.6Z" fill="#f75a52"/><circle cx="1357.1" cy="297.3" r="9.7" fill="#f75a52"/></g>
<path d="M1342.3,275.8 L1365.6,275.5 L1377.6,295.3 L1369.3,314.0 L1344.5,315.2 L1333.3,297.5Z" fill="none" stroke="#d02626" stroke-width="0.7"/>
<path d="M1398.6,307.3 L1420.3,303.5 L1434.6,320.8 L1427.8,341.1 L1406.1,347.1 L1392.6,328.3Z" fill="#a92c2c" />
<clipPath id="cl2"><path d="M1398.6,307.3 L1420.3,303.5 L1434.6,320.8 L1427.8,341.1 L1406.1,347.1 L1392.6,328.3Z"/></clipPath><g clip-path="url(#cl2)"><path d="M1358.2,307.0 L1362.5,306.7 L1366.8,306.7 L1371.2,307.1 L1375.4,307.8 L1379.6,308.9 L1383.8,310.2 L1387.8,311.9 L1391.6,313.9 L1395.3,316.2 L1398.8,318.7 L1402.1,321.5 L1405.2,324.6 L1408.1,327.9 L1410.6,331.4 L1412.9,335.0 L1414.9,338.9 L1416.6,342.9 L1418.0,347.0 L1419.1,351.2 L1419.8,355.5 L1420.2,359.8 L1420.3,364.1 L1420.1,368.4 L1419.5,372.7 L1438.7,376.1 L1439.5,370.3 L1439.8,364.5 L1439.7,358.7 L1439.2,352.9 L1438.2,347.1 L1436.7,341.4 L1434.9,335.9 L1432.6,330.5 L1429.9,325.4 L1426.8,320.4 L1423.3,315.7 L1419.5,311.3 L1415.3,307.2 L1410.9,303.4 L1406.2,299.9 L1401.2,296.9 L1396.0,294.2 L1390.6,292.0 L1385.1,290.1 L1379.4,288.7 L1373.6,287.8 L1367.8,287.3 L1362.0,287.2 L1356.1,287.6Z" fill="#f75a52"/></g>
<path d="M1400.1,307.7 L1422.6,304.0 L1436.1,320.0 L1430.1,340.3 L1407.6,346.8" fill="none" stroke="#d83030" stroke-width="0.7"/>
<path d="M1407.6,329.8 L1422.6,317.8" stroke="#b030a0" stroke-width="0.8" fill="none"/>
<path d="M1404.6,368.8 L1439.8,375.6 L1442.1,394.3 L1430.1,414.6 L1390.3,398.8Z" fill="#a92c2c" />
<path d="M1407.6,374.1 C1410.4,372.0 1411.2,371.6 1415.1,371.1 C1418.9,370.6 1418.8,370.6 1424.1,371.8 C1429.3,373.0 1434.0,370.9 1437.6,376.3 C1441.2,381.7 1441.5,387.8 1439.4,395.1 C1437.3,402.5 1432.2,405.2 1428.6,407.8 C1425.0,410.4 1425.7,407.2 1424.1,406.3 C1422.5,405.4 1423.2,404.1 1421.8,404.1 C1420.4,404.1 1419.8,406.5 1418.1,406.3 C1416.3,406.1 1416.0,403.8 1414.3,403.3 C1412.5,402.8 1412.2,405.0 1410.6,404.1 C1409.0,403.2 1409.3,401.0 1407.6,399.6 C1405.8,398.2 1404.8,399.9 1403.1,398.1 C1401.3,396.4 1401.1,394.2 1400.1,392.1 C1399.0,390.0 1397.9,391.9 1398.6,389.1 C1399.3,386.3 1401.0,383.6 1403.1,380.1 C1405.2,376.6 1404.8,376.2 1407.6,374.1Z" fill="#f75a52" />
<path d="M1404.6,368.8 L1439.8,375.6 L1442.1,394.3 L1430.1,414.6 L1390.3,398.8Z" fill="none" stroke="#d02626" stroke-width="0.7"/>
<path d="M1418.8,380.8 L1437.6,375.6" stroke="#b030a0" stroke-width="0.8" fill="none"/>
<defs><filter id="glow" x="-30%" y="-30%" width="160%" height="160%"><feGaussianBlur stdDeviation="1.1"/></filter></defs>
<path d="M1355.0,340.0 L1381.8,340.0 L1368.6,362.7Z" fill="#3a1616" filter="url(#glow)" opacity="0.9"/>
<path d="M1356.5,341.1 L1380.3,341.1 L1368.6,360.9Z" fill="#ff0000" />
<path d="M1175.3,287.3 L1181.8,282.5 L1194.4,282.5 L1201.0,288.2 L1200.1,300.8 L1188.8,307.4 L1177.3,300.8Z" fill="#2db22d" />
<clipPath id="cl3"><path d="M1175.3,287.3 L1181.8,282.5 L1194.4,282.5 L1201.0,288.2 L1200.1,300.8 L1188.8,307.4 L1177.3,300.8Z"/></clipPath><g clip-path="url(#cl3)"><path d="M1177.7,294.6 L1178.4,299.3 L1178.6,304.0 L1178.3,308.8 L1177.5,313.5 L1176.1,318.0 L1174.3,322.4 L1172.0,326.6 L1169.2,330.4 L1166.0,334.0 L1162.5,337.2 L1158.6,339.9 L1154.4,342.2 L1150.1,344.1 L1145.5,345.4 L1140.8,346.3 L1136.1,346.6 L1131.3,346.4 L1126.6,345.7 L1122.0,344.4 L1117.6,342.7 L1113.4,340.5 L1109.4,337.8 L1105.8,334.7 L1102.6,331.2 L1087.6,343.8 L1092.3,348.8 L1097.6,353.3 L1103.3,357.2 L1109.4,360.4 L1115.9,362.9 L1122.5,364.7 L1129.4,365.8 L1136.3,366.1 L1143.2,365.6 L1150.0,364.4 L1156.6,362.5 L1163.0,359.8 L1169.0,356.4 L1174.7,352.4 L1179.8,347.8 L1184.4,342.6 L1188.4,337.0 L1191.8,331.0 L1194.5,324.6 L1196.5,318.0 L1197.7,311.2 L1198.1,304.3 L1197.8,297.3 L1196.8,290.5Z" fill="#7cd354"/><circle cx="1187.2" cy="292.5" r="9.8" fill="#7cd354"/></g>
<path d="M1143.8,339.5 L1156.6,334.6 L1170.1,345.6 L1167.8,360.6 L1153.6,365.8 L1140.8,356.1Z" fill="#2db22d" />
<clipPath id="cl4"><path d="M1143.8,339.5 L1156.6,334.6 L1170.1,345.6 L1167.8,360.6 L1153.6,365.8 L1140.8,356.1Z"/></clipPath><g clip-path="url(#cl4)"><path d="M1177.7,294.6 L1178.4,299.3 L1178.6,304.0 L1178.3,308.8 L1177.5,313.5 L1176.1,318.0 L1174.3,322.4 L1172.0,326.6 L1169.2,330.4 L1166.0,334.0 L1162.5,337.2 L1158.6,339.9 L1154.4,342.2 L1150.1,344.1 L1145.5,345.4 L1140.8,346.3 L1136.1,346.6 L1131.3,346.4 L1126.6,345.7 L1122.0,344.4 L1117.6,342.7 L1113.4,340.5 L1109.4,337.8 L1105.8,334.7 L1102.6,331.2 L1087.6,343.8 L1092.3,348.8 L1097.6,353.3 L1103.3,357.2 L1109.4,360.4 L1115.9,362.9 L1122.5,364.7 L1129.4,365.8 L1136.3,366.1 L1143.2,365.6 L1150.0,364.4 L1156.6,362.5 L1163.0,359.8 L1169.0,356.4 L1174.7,352.4 L1179.8,347.8 L1184.4,342.6 L1188.4,337.0 L1191.8,331.0 L1194.5,324.6 L1196.5,318.0 L1197.7,311.2 L1198.1,304.3 L1197.8,297.3 L1196.8,290.5Z" fill="#7cd354"/></g>
<path d="M1142.8,341.1 L1155.1,335.8" stroke="#2aa02a" stroke-width="0.7" fill="none"/>
<path d="M1152.1,341.1 L1159.3,359.1" stroke="#4a8a90" stroke-width="0.8" fill="none"/>
<path d="M1096.5,302.8 L1118.3,326.0 L1112.3,340.3 L1097.3,356.1 L1065.0,331.7Z" fill="#2db22d" />
<path d="M1095.0,314.0 C1098.0,312.9 1098.0,311.6 1101.0,311.8 C1104.0,312.0 1105.2,312.2 1107.8,314.8 C1110.4,317.4 1111.4,319.3 1112.3,323.0 C1113.2,326.7 1112.5,327.7 1111.5,330.5 C1110.5,333.3 1107.6,332.5 1107.8,335.0 C1108.0,337.5 1114.2,336.7 1112.3,341.1 C1110.4,345.5 1103.5,351.4 1099.5,353.8 C1095.5,356.2 1100.6,356.0 1095.0,351.6 C1089.4,347.2 1080.4,339.9 1075.5,335.0 C1070.6,330.1 1073.7,332.2 1074.0,330.5 C1074.3,328.8 1075.6,329.1 1077.0,327.5 C1078.4,325.9 1078.4,325.6 1080.0,323.8 C1081.6,322.1 1081.9,321.8 1083.8,320.0 C1085.7,318.2 1085.7,317.7 1088.3,316.3 C1090.9,314.9 1092.0,315.1 1095.0,314.0Z" fill="#7cd354" />
<path d="M1100.7,335.0 L1098.3,353.1" stroke="#4a8a90" stroke-width="0.8" fill="none"/>
<path d="M1124.3,282.2 L1150.9,282.2 L1137.5,304.7Z" fill="#163a16" filter="url(#glow)" opacity="0.9"/>
<path d="M1125.8,283.3 L1149.4,283.3 L1137.5,302.8Z" fill="#00ff00" />
<path d="M1192.3,416.4 L1201.9,437.0 L1219.5,422.6 L1211.7,444.0 L1234.3,446.3 L1213.7,455.9 L1228.1,473.5 L1206.7,465.7 L1204.5,488.3 L1194.8,467.7 L1177.2,482.1 L1185.0,460.7 L1162.4,458.4 L1183.0,448.8 L1168.6,431.2 L1190.0,439.0Z" fill="#c02222" opacity="0.9"/>
<path d="M1189.9,418.5 L1201.0,436.7 L1216.7,422.2 L1211.7,443.0 L1233.1,443.9 L1214.9,455.0 L1229.4,470.7 L1208.6,465.7 L1207.7,487.1 L1196.6,468.9 L1180.9,483.3 L1185.9,462.6 L1164.5,461.7 L1182.8,450.6 L1168.3,434.9 L1189.0,439.9Z" fill="#8d5149" />
<circle cx="1198.8" cy="452.8" r="0.9" fill="#e02020"/>
<path d="M1146.7,410.8 L1158.7,422.5 L1147.0,434.8 L1135.0,422.8Z" fill="none" stroke="#a83232" stroke-width="0.8"/>
<path d="M1146.7,413.3 L1156.0,422.5 L1147.0,432.2 L1137.7,422.8Z" fill="none" stroke="#8a3838" stroke-width="0.6"/>
<circle cx="1146.7" cy="422.8" r="0.9" fill="#e02020"/>
<path d="M1323.2,431.9 L1325.3,455.0 L1347.0,447.1 L1332.2,464.9 L1353.2,474.7 L1330.1,476.8 L1338.0,498.5 L1320.2,483.7 L1310.4,504.7 L1308.3,481.6 L1286.5,489.5 L1301.4,471.7 L1280.4,461.9 L1303.5,459.8 L1295.6,438.0 L1313.4,452.9Z" fill="#2ab02a" />
<path d="M1320.7,431.7 L1325.3,452.6 L1345.1,444.4 L1333.6,462.5 L1353.4,470.7 L1332.5,475.3 L1340.7,495.1 L1322.6,483.6 L1314.4,503.4 L1309.8,482.5 L1289.9,490.7 L1301.5,472.6 L1281.7,464.4 L1302.6,459.8 L1294.4,439.9 L1312.5,451.5Z" fill="#0cc843" />
<circle cx="1317.5" cy="467.5" r="0.8" fill="#30e060"/>
<path d="M1274.8,495.3 L1286.0,507.3 L1275.5,523.4 L1262.3,510.8Z" fill="#2caa2c" />
<path d="M1274.8,499.1 L1283.3,507.8 L1275.2,519.8 L1265.3,510.3Z" fill="#34b434" />
<circle cx="1274.3" cy="508.4" r="0.8" fill="#40e040"/>
<rect x="1074" y="564" width="111" height="9" fill="#b82020" opacity="0.85"/>
<rect x="1077" y="568.6" width="99" height="0.9" fill="#e01c1c"/>
<rect x="1319" y="563" width="103" height="11.7" fill="#15d715" opacity="0.7"/>
<rect x="1320" y="569" width="100" height="0.8" fill="#34d034"/>
<path d="M1292.1,178.8 L1301.1,174.7 L1305.6,184.0 L1296.9,187.8Z" fill="none" stroke="#c39a2c" stroke-width="0.8"/>
<path d="M1296.9,187.8 L1290.3,204.3" fill="none" stroke="#c39a2c" stroke-width="0.8"/>
<path d="M1208.0,255.3 L1216.7,250.1 L1221.8,259.1 L1213.3,264.3Z" fill="none" stroke="#c39a2c" stroke-width="0.8"/>
<path d="M1220.8,257.3 L1240.3,285.8 L1256.0,289.4" fill="none" stroke="#c39a2c" stroke-width="0.8"/>
<path d="M1221.8,296.3 H1311" stroke="#d09c1c" stroke-width="0.9"/>
<path d="M1221.4,345.9 H1311" stroke="#d09c1c" stroke-width="0.9"/>
<path d="M1220.7,393.3 H1313.3" stroke="#d09c1c" stroke-width="0.9"/>
<circle cx="1267.3" cy="296.1" r="0.8" fill="#1a1a1a"/>
<circle cx="1267.9" cy="383.1" r="0.8" fill="#1a1a1a"/>
</svg>
<span class="t" id="t_title" style="left:1053px;top:24.9px;font-size:12px;color:#000;transform:scaleX(.952)">Visual Selector</span>
<span class="t" id="t_tag" style="left:1394px;top:49.5px;font-size:11px;color:#9c9c9c;transform:scaleX(1.07)">Tag</span>
<span class="t" id="t_dd" style="left:1426px;top:49.5px;font-size:11px;font-weight:bold;color:#dde4ec;transform:scaleX(.953)">Visual Selector</span>
<span class="t" id="t_basic" style="left:1030.4px;top:69.6px;font-size:11px;font-weight:bold;color:#cfcfcf;transform:scaleX(.875)">Basic</span>
<span class="t" id="t_tab" style="left:1071px;top:69.6px;font-size:11px;font-weight:bold;color:#000;transform:scaleX(.99)">Tag</span>
<span class="t" id="t_setup" style="left:1104px;top:69.6px;font-size:11px;font-weight:bold;color:#cfcfcf;transform:scaleX(.965)">Setup</span>
<span class="t" id="t_props" style="left:1026.3px;top:91.7px;font-size:11px;font-weight:bold;color:#b8b8b8;transform:scaleX(.981)">Tag Properties</span>
<span class="t" id="t_view" style="left:1211.5px;top:111.5px;font-size:11px;font-weight:bold;color:#000;transform:scaleX(1.006)">View (Default)</span>
<span class="t" id="t_cam" style="left:730.4px;top:1.3px;font-size:11px;color:#dadada">render_Camera</span>
<div style="position:absolute;left:746px;top:1045px;width:64px;height:15px;background:rgba(72,72,72,.78);border-radius:3px"></div>
<span class="t" id="t_fps" style="left:748.5px;top:1048px;font-size:11px;font-weight:bold;color:#d4d4d4;transform:scaleX(.93)">FPS : 166.7</span>
</body></html>
